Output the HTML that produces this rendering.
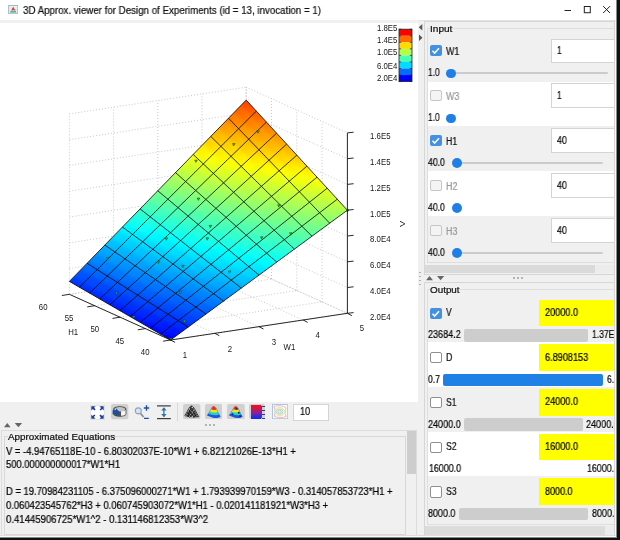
<!DOCTYPE html><html><head><meta charset="utf-8"><title>3D Approx. viewer</title><style>
*{box-sizing:border-box;margin:0;padding:0}
html,body{width:620px;height:540px;overflow:hidden;background:#f0f0f0}
body{position:relative;font-family:"Liberation Sans",sans-serif;font-size:10px;color:#000}
.abs{position:absolute}
.t{position:absolute;white-space:nowrap;transform-origin:0 0;display:block;-webkit-text-stroke:0.22px currentColor;will-change:transform}
.cb{position:absolute;width:11.5px;height:11.2px;border-radius:2px}
.cb.on{background:#4490e2}
.cb.off{background:#fff;border:1px solid #8f8f8f}
.cb.dis{background:#f4f4f4;border:1px solid #c6c6c6}
.fld{position:absolute;background:#fff;border:1px solid #d4d4d4}
.yl{position:absolute;background:#ffff00}
.knob{position:absolute;width:9.6px;height:9.6px;border-radius:5px;background:#1f7fe8}
.trk{position:absolute;height:1.6px;background:#cfcfcf;border-radius:1px}
.bar{position:absolute;border-radius:2px;background:#cdcdcd}
</style></head><body><div class="abs" style="left:0.0px;top:0.0px;width:620.0px;height:19.5px;background:#fff;"></div>
<div class="abs" style="left:418.0px;top:19.5px;width:202.0px;height:1.0px;background:#e4e4e4;"></div>
<svg class="abs" style="left:7.500px;top:4.800px" width="10.500" height="9.200" viewBox="0 0 12 11"><rect x="0.5" y="0.5" width="11" height="10" fill="#e8eef5" stroke="#a4abb4" stroke-width="1"/><path d="M2 9 L6 2.5 L10 9Z" fill="#39c"/><path d="M3.8 6.2 L6 2.5 L8.2 6.2Z" fill="#f33"/><path d="M3 7.5 L9 7.500 L8.2 6.2 L3.8 6.2Z" fill="#fd3"/></svg>
<div class="t" id="t0" style="left:23.00px;top:3.85px;font-size:10.58px;line-height:12.17px;color:#111;transform:scaleX(0.9198);">3D Approx. viewer for Design of Experiments (id = 13, invocation = 1)</div>
<svg class="abs" style="left:560px;top:0" width="57" height="19" viewBox="0 0 57 19"><g stroke="#222" stroke-width="1" fill="none"><line x1="4.500" y1="10.500" x2="11" y2="10.500"/><rect x="24.300" y="6.500" width="6" height="6.200"/><path d="M43.200 6.200 L50 13 M50 6.200 L43.200 13"/></g></svg>
<div class="abs" style="left:0.0px;top:22.5px;width:418.0px;height:379.0px;background:#fff;"></div>
<svg width="418" height="402" viewBox="0 0 418 402" style="position:absolute;left:0;top:0;will-change:transform"><g stroke="#b0b0b0" stroke-width="0.7" stroke-dasharray="1 2" fill="none"><line x1="170.6" y1="340.0" x2="69.4" y2="294.3"/><line x1="170.6" y1="340.0" x2="347.4" y2="313.3"/><line x1="214.8" y1="333.3" x2="113.6" y2="287.6"/><line x1="145.3" y1="328.6" x2="322.1" y2="301.9"/><line x1="259.0" y1="326.6" x2="157.8" y2="281.0"/><line x1="120.0" y1="317.2" x2="296.8" y2="290.5"/><line x1="303.2" y1="320.0" x2="202.0" y2="274.3"/><line x1="94.7" y1="305.7" x2="271.5" y2="279.0"/><line x1="347.4" y1="313.3" x2="246.2" y2="267.6"/><line x1="69.4" y1="294.3" x2="246.2" y2="267.6"/><line x1="69.4" y1="294.3" x2="69.4" y2="113.9"/><line x1="347.4" y1="313.3" x2="347.4" y2="132.9"/><line x1="113.6" y1="287.6" x2="113.6" y2="107.2"/><line x1="322.1" y1="301.9" x2="322.1" y2="121.5"/><line x1="157.8" y1="281.0" x2="157.8" y2="100.6"/><line x1="296.8" y1="290.5" x2="296.8" y2="110.1"/><line x1="202.0" y1="274.3" x2="202.0" y2="93.9"/><line x1="271.5" y1="279.0" x2="271.5" y2="98.6"/><line x1="246.2" y1="267.6" x2="246.2" y2="87.2"/><line x1="246.2" y1="267.6" x2="246.2" y2="87.2"/><line x1="69.4" y1="294.3" x2="246.2" y2="267.6"/><line x1="246.2" y1="267.6" x2="347.4" y2="313.3"/><line x1="69.4" y1="268.5" x2="246.2" y2="241.8"/><line x1="246.2" y1="241.8" x2="347.4" y2="287.5"/><line x1="69.4" y1="242.8" x2="246.2" y2="216.1"/><line x1="246.2" y1="216.1" x2="347.4" y2="261.8"/><line x1="69.4" y1="217.0" x2="246.2" y2="190.3"/><line x1="246.2" y1="190.3" x2="347.4" y2="236.0"/><line x1="69.4" y1="191.2" x2="246.2" y2="164.5"/><line x1="246.2" y1="164.5" x2="347.4" y2="210.2"/><line x1="69.4" y1="165.4" x2="246.2" y2="138.7"/><line x1="246.2" y1="138.7" x2="347.4" y2="184.4"/><line x1="69.4" y1="139.7" x2="246.2" y2="113.0"/><line x1="246.2" y1="113.0" x2="347.4" y2="158.7"/><line x1="69.4" y1="113.9" x2="246.2" y2="87.2"/><line x1="246.2" y1="87.2" x2="347.4" y2="132.9"/></g><defs><clipPath id="sc"><polygon points="170.6,340.0 347.4,210.2 246.2,100.1 69.4,281.4"/></clipPath><filter id="bl" x="-5%" y="-5%" width="110%" height="110%"><feGaussianBlur stdDeviation="2.2"/></filter></defs><g clip-path="url(#sc)"><g filter="url(#bl)" stroke-width="0.8" shape-rendering="crispEdges"><path d="M166.1 351.1L173.7 345.7L169.3 343.2L161.7 348.7" fill="#0000ff"/><path d="M161.7 348.7L169.3 343.2L165.0 340.7L157.3 346.3" fill="#0000ff"/><path d="M157.3 346.3L165.0 340.7L160.6 338.2L153.0 343.9" fill="#0000ff"/><path d="M153.0 343.9L160.6 338.2L156.2 335.7L148.6 341.6" fill="#0000ff"/><path d="M148.6 341.6L156.2 335.7L151.9 333.2L144.3 339.2" fill="#0000ff"/><path d="M144.3 339.2L151.9 333.2L147.5 330.7L139.9 336.8" fill="#0000ff"/><path d="M139.9 336.8L147.5 330.7L143.2 328.3L135.5 334.4" fill="#0000ff"/><path d="M135.5 334.4L143.2 328.3L138.8 325.8L131.2 332.0" fill="#0000ff"/><path d="M131.2 332.0L138.8 325.8L134.4 323.3L126.8 329.6" fill="#0000ff"/><path d="M126.8 329.6L134.4 323.3L130.1 320.8L122.5 327.2" fill="#0000ff"/><path d="M122.5 327.2L130.1 320.8L125.7 318.3L118.1 324.8" fill="#0001ff"/><path d="M118.1 324.8L125.7 318.3L121.4 315.8L113.8 322.4" fill="#0003ff"/><path d="M113.8 322.4L121.4 315.8L117.0 313.3L109.4 320.0" fill="#0005ff"/><path d="M109.4 320.0L117.0 313.3L112.6 310.9L105.0 317.7" fill="#0007ff"/><path d="M105.0 317.7L112.6 310.9L108.3 308.4L100.7 315.3" fill="#0009ff"/><path d="M100.7 315.3L108.3 308.4L103.9 305.9L96.3 312.9" fill="#000bff"/><path d="M96.3 312.9L103.9 305.9L99.6 303.4L92.0 310.5" fill="#000dff"/><path d="M92.0 310.5L99.6 303.4L95.2 300.9L87.6 308.1" fill="#000fff"/><path d="M87.6 308.1L95.2 300.9L90.9 298.4L83.2 305.7" fill="#0011ff"/><path d="M83.2 305.7L90.9 298.4L86.5 295.9L78.9 303.3" fill="#0013ff"/><path d="M78.9 303.3L86.5 295.9L82.1 293.5L74.5 300.9" fill="#0015ff"/><path d="M74.5 300.9L82.1 293.5L77.8 291.0L70.2 298.5" fill="#0017ff"/><path d="M70.2 298.5L77.8 291.0L73.4 288.5L65.8 296.1" fill="#0019ff"/><path d="M65.8 296.1L73.4 288.5L69.1 286.0L61.4 293.7" fill="#001bff"/><path d="M61.4 293.7L69.1 286.0L64.7 283.5L57.1 291.4" fill="#001dff"/><path d="M57.1 291.4L64.7 283.5L60.3 281.0L52.7 289.0" fill="#001fff"/><path d="M173.7 345.7L181.3 340.2L176.9 337.6L169.3 343.2" fill="#0000ff"/><path d="M169.3 343.2L176.9 337.6L172.6 335.0L165.0 340.7" fill="#0002ff"/><path d="M165.0 340.7L172.6 335.0L168.2 332.5L160.6 338.2" fill="#0005ff"/><path d="M160.6 338.2L168.2 332.5L163.9 329.9L156.2 335.7" fill="#0007ff"/><path d="M156.2 335.7L163.9 329.9L159.5 327.3L151.9 333.2" fill="#0009ff"/><path d="M151.9 333.2L159.5 327.3L155.1 324.7L147.5 330.7" fill="#000cff"/><path d="M147.5 330.7L155.1 324.7L150.8 322.1L143.2 328.3" fill="#000eff"/><path d="M143.2 328.3L150.8 322.1L146.4 319.5L138.8 325.8" fill="#0010ff"/><path d="M138.8 325.8L146.4 319.5L142.1 317.0L134.4 323.3" fill="#0013ff"/><path d="M134.4 323.3L142.1 317.0L137.7 314.4L130.1 320.8" fill="#0015ff"/><path d="M130.1 320.8L137.7 314.4L133.3 311.8L125.7 318.3" fill="#0018ff"/><path d="M125.7 318.3L133.3 311.8L129.0 309.2L121.4 315.8" fill="#001aff"/><path d="M121.4 315.8L129.0 309.2L124.6 306.6L117.0 313.3" fill="#001cff"/><path d="M117.0 313.3L124.6 306.6L120.3 304.1L112.6 310.9" fill="#001fff"/><path d="M112.6 310.9L120.3 304.1L115.9 301.5L108.3 308.4" fill="#0021ff"/><path d="M108.3 308.4L115.9 301.5L111.5 298.9L103.9 305.9" fill="#0023ff"/><path d="M103.9 305.9L111.5 298.9L107.2 296.3L99.6 303.4" fill="#0026ff"/><path d="M99.6 303.4L107.2 296.3L102.8 293.7L95.2 300.9" fill="#0028ff"/><path d="M95.2 300.9L102.8 293.7L98.5 291.1L90.9 298.4" fill="#002aff"/><path d="M90.9 298.4L98.5 291.1L94.1 288.6L86.5 295.9" fill="#002dff"/><path d="M86.5 295.9L94.1 288.6L89.7 286.0L82.1 293.5" fill="#002fff"/><path d="M82.1 293.5L89.7 286.0L85.4 283.4L77.8 291.0" fill="#0032ff"/><path d="M77.8 291.0L85.4 283.4L81.0 280.8L73.4 288.5" fill="#0034ff"/><path d="M73.4 288.5L81.0 280.8L76.7 278.2L69.1 286.0" fill="#0036ff"/><path d="M69.1 286.0L76.7 278.2L72.3 275.7L64.7 283.5" fill="#0039ff"/><path d="M64.7 283.5L72.3 275.7L68.0 273.1L60.3 281.0" fill="#003bff"/><path d="M181.3 340.2L188.9 334.7L184.6 332.1L176.9 337.6" fill="#0012ff"/><path d="M176.9 337.6L184.6 332.1L180.2 329.4L172.6 335.0" fill="#0015ff"/><path d="M172.6 335.0L180.2 329.4L175.8 326.7L168.2 332.5" fill="#0018ff"/><path d="M168.2 332.5L175.8 326.7L171.5 324.0L163.9 329.9" fill="#001aff"/><path d="M163.9 329.9L171.5 324.0L167.1 321.4L159.5 327.3" fill="#001dff"/><path d="M159.5 327.3L167.1 321.4L162.8 318.7L155.1 324.7" fill="#0020ff"/><path d="M155.1 324.7L162.8 318.7L158.4 316.0L150.8 322.1" fill="#0023ff"/><path d="M150.8 322.1L158.4 316.0L154.0 313.3L146.4 319.5" fill="#0025ff"/><path d="M146.4 319.5L154.0 313.3L149.7 310.6L142.1 317.0" fill="#0028ff"/><path d="M142.1 317.0L149.7 310.6L145.3 308.0L137.7 314.4" fill="#002bff"/><path d="M137.7 314.4L145.3 308.0L141.0 305.3L133.3 311.8" fill="#002eff"/><path d="M133.3 311.8L141.0 305.3L136.6 302.6L129.0 309.2" fill="#0030ff"/><path d="M129.0 309.2L136.6 302.6L132.2 299.9L124.6 306.6" fill="#0033ff"/><path d="M124.6 306.6L132.2 299.9L127.9 297.3L120.3 304.1" fill="#0036ff"/><path d="M120.3 304.1L127.9 297.3L123.5 294.6L115.9 301.5" fill="#0039ff"/><path d="M115.9 301.5L123.5 294.6L119.2 291.9L111.5 298.9" fill="#003cff"/><path d="M111.5 298.9L119.2 291.9L114.8 289.2L107.2 296.3" fill="#003eff"/><path d="M107.2 296.3L114.8 289.2L110.4 286.6L102.8 293.7" fill="#0041ff"/><path d="M102.8 293.7L110.4 286.6L106.1 283.9L98.5 291.1" fill="#0044ff"/><path d="M98.5 291.1L106.1 283.9L101.7 281.2L94.1 288.6" fill="#0047ff"/><path d="M94.1 288.6L101.7 281.2L97.4 278.5L89.7 286.0" fill="#0049ff"/><path d="M89.7 286.0L97.4 278.5L93.0 275.8L85.4 283.4" fill="#004cff"/><path d="M85.4 283.4L93.0 275.8L88.6 273.2L81.0 280.8" fill="#004fff"/><path d="M81.0 280.8L88.6 273.2L84.3 270.5L76.7 278.2" fill="#0052ff"/><path d="M76.7 278.2L84.3 270.5L79.9 267.8L72.3 275.7" fill="#0054ff"/><path d="M72.3 275.7L79.9 267.8L75.6 265.1L68.0 273.1" fill="#0057ff"/><path d="M188.9 334.7L196.5 329.3L192.2 326.5L184.6 332.1" fill="#0024ff"/><path d="M184.6 332.1L192.2 326.5L187.8 323.7L180.2 329.4" fill="#0027ff"/><path d="M180.2 329.4L187.8 323.7L183.4 321.0L175.8 326.7" fill="#002bff"/><path d="M175.8 326.7L183.4 321.0L179.1 318.2L171.5 324.0" fill="#002eff"/><path d="M171.5 324.0L179.1 318.2L174.7 315.4L167.1 321.4" fill="#0031ff"/><path d="M167.1 321.4L174.7 315.4L170.4 312.6L162.8 318.7" fill="#0034ff"/><path d="M162.8 318.7L170.4 312.6L166.0 309.9L158.4 316.0" fill="#0037ff"/><path d="M158.4 316.0L166.0 309.9L161.7 307.1L154.0 313.3" fill="#003aff"/><path d="M154.0 313.3L161.7 307.1L157.3 304.3L149.7 310.6" fill="#003eff"/><path d="M149.7 310.6L157.3 304.3L152.9 301.6L145.3 308.0" fill="#0041ff"/><path d="M145.3 308.0L152.9 301.6L148.6 298.8L141.0 305.3" fill="#0044ff"/><path d="M141.0 305.3L148.6 298.8L144.2 296.0L136.6 302.6" fill="#0047ff"/><path d="M136.6 302.6L144.2 296.0L139.9 293.2L132.2 299.9" fill="#004aff"/><path d="M132.2 299.9L139.9 293.2L135.5 290.5L127.9 297.3" fill="#004dff"/><path d="M127.9 297.3L135.5 290.5L131.1 287.7L123.5 294.6" fill="#0051ff"/><path d="M123.5 294.6L131.1 287.7L126.8 284.9L119.2 291.9" fill="#0054ff"/><path d="M119.2 291.9L126.8 284.9L122.4 282.1L114.8 289.2" fill="#0057ff"/><path d="M114.8 289.2L122.4 282.1L118.1 279.4L110.4 286.6" fill="#005aff"/><path d="M110.4 286.6L118.1 279.4L113.7 276.6L106.1 283.9" fill="#005dff"/><path d="M106.1 283.9L113.7 276.6L109.3 273.8L101.7 281.2" fill="#0060ff"/><path d="M101.7 281.2L109.3 273.8L105.0 271.1L97.4 278.5" fill="#0064ff"/><path d="M97.4 278.5L105.0 271.1L100.6 268.3L93.0 275.8" fill="#0067ff"/><path d="M93.0 275.8L100.6 268.3L96.3 265.5L88.6 273.2" fill="#006aff"/><path d="M88.6 273.2L96.3 265.5L91.9 262.7L84.3 270.5" fill="#006dff"/><path d="M84.3 270.5L91.9 262.7L87.5 260.0L79.9 267.8" fill="#0070ff"/><path d="M79.9 267.8L87.5 260.0L83.2 257.2L75.6 265.1" fill="#0073ff"/><path d="M196.5 329.3L204.1 323.8L199.8 321.0L192.2 326.5" fill="#0037ff"/><path d="M192.2 326.5L199.8 321.0L195.4 318.1L187.8 323.7" fill="#003aff"/><path d="M187.8 323.7L195.4 318.1L191.1 315.2L183.4 321.0" fill="#003eff"/><path d="M183.4 321.0L191.1 315.2L186.7 312.4L179.1 318.2" fill="#0041ff"/><path d="M179.1 318.2L186.7 312.4L182.3 309.5L174.7 315.4" fill="#0045ff"/><path d="M174.7 315.4L182.3 309.5L178.0 306.6L170.4 312.6" fill="#0048ff"/><path d="M170.4 312.6L178.0 306.6L173.6 303.7L166.0 309.9" fill="#004cff"/><path d="M166.0 309.9L173.6 303.7L169.3 300.9L161.7 307.1" fill="#004fff"/><path d="M161.7 307.1L169.3 300.9L164.9 298.0L157.3 304.3" fill="#0053ff"/><path d="M157.3 304.3L164.9 298.0L160.6 295.1L152.9 301.6" fill="#0057ff"/><path d="M152.9 301.6L160.6 295.1L156.2 292.3L148.6 298.8" fill="#005aff"/><path d="M148.6 298.8L156.2 292.3L151.8 289.4L144.2 296.0" fill="#005eff"/><path d="M144.2 296.0L151.8 289.4L147.5 286.5L139.9 293.2" fill="#0061ff"/><path d="M139.9 293.2L147.5 286.5L143.1 283.7L135.5 290.5" fill="#0065ff"/><path d="M135.5 290.5L143.1 283.7L138.8 280.8L131.1 287.7" fill="#0068ff"/><path d="M131.1 287.7L138.8 280.8L134.4 277.9L126.8 284.9" fill="#006cff"/><path d="M126.8 284.9L134.4 277.9L130.0 275.1L122.4 282.1" fill="#0070ff"/><path d="M122.4 282.1L130.0 275.1L125.7 272.2L118.1 279.4" fill="#0073ff"/><path d="M118.1 279.4L125.7 272.2L121.3 269.3L113.7 276.6" fill="#0077ff"/><path d="M113.7 276.6L121.3 269.3L117.0 266.5L109.3 273.8" fill="#007aff"/><path d="M109.3 273.8L117.0 266.5L112.6 263.6L105.0 271.1" fill="#007eff"/><path d="M105.0 271.1L112.6 263.6L108.2 260.7L100.6 268.3" fill="#0081ff"/><path d="M100.6 268.3L108.2 260.7L103.9 257.8L96.3 265.5" fill="#0085ff"/><path d="M96.3 265.5L103.9 257.8L99.5 255.0L91.9 262.7" fill="#0088ff"/><path d="M91.9 262.7L99.5 255.0L95.2 252.1L87.5 260.0" fill="#008cff"/><path d="M87.5 260.0L95.2 252.1L90.8 249.2L83.2 257.2" fill="#0090ff"/><path d="M204.1 323.8L211.8 318.4L207.4 315.4L199.8 321.0" fill="#0049ff"/><path d="M199.8 321.0L207.4 315.4L203.0 312.4L195.4 318.1" fill="#004dff"/><path d="M195.4 318.1L203.0 312.4L198.7 309.5L191.1 315.2" fill="#0051ff"/><path d="M191.1 315.2L198.7 309.5L194.3 306.5L186.7 312.4" fill="#0055ff"/><path d="M186.7 312.4L194.3 306.5L190.0 303.5L182.3 309.5" fill="#0059ff"/><path d="M182.3 309.5L190.0 303.5L185.6 300.6L178.0 306.6" fill="#005dff"/><path d="M178.0 306.6L185.6 300.6L181.2 297.6L173.6 303.7" fill="#0060ff"/><path d="M173.6 303.7L181.2 297.6L176.9 294.7L169.3 300.9" fill="#0064ff"/><path d="M169.3 300.9L176.9 294.7L172.5 291.7L164.9 298.0" fill="#0068ff"/><path d="M164.9 298.0L172.5 291.7L168.2 288.7L160.6 295.1" fill="#006cff"/><path d="M160.6 295.1L168.2 288.7L163.8 285.8L156.2 292.3" fill="#0070ff"/><path d="M156.2 292.3L163.8 285.8L159.4 282.8L151.8 289.4" fill="#0074ff"/><path d="M151.8 289.4L159.4 282.8L155.1 279.8L147.5 286.5" fill="#0078ff"/><path d="M147.5 286.5L155.1 279.8L150.7 276.9L143.1 283.7" fill="#007cff"/><path d="M143.1 283.7L150.7 276.9L146.4 273.9L138.8 280.8" fill="#0080ff"/><path d="M138.8 280.8L146.4 273.9L142.0 270.9L134.4 277.9" fill="#0084ff"/><path d="M134.4 277.9L142.0 270.9L137.7 268.0L130.0 275.1" fill="#0088ff"/><path d="M130.0 275.1L137.7 268.0L133.3 265.0L125.7 272.2" fill="#008cff"/><path d="M125.7 272.2L133.3 265.0L128.9 262.0L121.3 269.3" fill="#0090ff"/><path d="M121.3 269.3L128.9 262.0L124.6 259.1L117.0 266.5" fill="#0094ff"/><path d="M117.0 266.5L124.6 259.1L120.2 256.1L112.6 263.6" fill="#0098ff"/><path d="M112.6 263.6L120.2 256.1L115.9 253.2L108.2 260.7" fill="#009cff"/><path d="M108.2 260.7L115.9 253.2L111.5 250.2L103.9 257.8" fill="#00a0ff"/><path d="M103.9 257.8L111.5 250.2L107.1 247.2L99.5 255.0" fill="#00a4ff"/><path d="M99.5 255.0L107.1 247.2L102.8 244.3L95.2 252.1" fill="#00a8ff"/><path d="M95.2 252.1L102.8 244.3L98.4 241.3L90.8 249.2" fill="#00acff"/><path d="M211.8 318.4L219.4 312.9L215.0 309.9L207.4 315.4" fill="#005bff"/><path d="M207.4 315.4L215.0 309.9L210.7 306.8L203.0 312.4" fill="#005fff"/><path d="M203.0 312.4L210.7 306.8L206.3 303.7L198.7 309.5" fill="#0064ff"/><path d="M198.7 309.5L206.3 303.7L201.9 300.7L194.3 306.5" fill="#0068ff"/><path d="M194.3 306.5L201.9 300.7L197.6 297.6L190.0 303.5" fill="#006cff"/><path d="M190.0 303.5L197.6 297.6L193.2 294.6L185.6 300.6" fill="#0071ff"/><path d="M185.6 300.6L193.2 294.6L188.9 291.5L181.2 297.6" fill="#0075ff"/><path d="M181.2 297.6L188.9 291.5L184.5 288.4L176.9 294.7" fill="#0079ff"/><path d="M176.9 294.7L184.5 288.4L180.1 285.4L172.5 291.7" fill="#007eff"/><path d="M172.5 291.7L180.1 285.4L175.8 282.3L168.2 288.7" fill="#0082ff"/><path d="M168.2 288.7L175.8 282.3L171.4 279.3L163.8 285.8" fill="#0087ff"/><path d="M163.8 285.8L171.4 279.3L167.1 276.2L159.4 282.8" fill="#008bff"/><path d="M159.4 282.8L167.1 276.2L162.7 273.1L155.1 279.8" fill="#008fff"/><path d="M155.1 279.8L162.7 273.1L158.3 270.1L150.7 276.9" fill="#0094ff"/><path d="M150.7 276.9L158.3 270.1L154.0 267.0L146.4 273.9" fill="#0098ff"/><path d="M146.4 273.9L154.0 267.0L149.6 264.0L142.0 270.9" fill="#009cff"/><path d="M142.0 270.9L149.6 264.0L145.3 260.9L137.7 268.0" fill="#00a1ff"/><path d="M137.7 268.0L145.3 260.9L140.9 257.8L133.3 265.0" fill="#00a5ff"/><path d="M133.3 265.0L140.9 257.8L136.5 254.8L128.9 262.0" fill="#00a9ff"/><path d="M128.9 262.0L136.5 254.8L132.2 251.7L124.6 259.1" fill="#00aeff"/><path d="M124.6 259.1L132.2 251.7L127.8 248.7L120.2 256.1" fill="#00b2ff"/><path d="M120.2 256.1L127.8 248.7L123.5 245.6L115.9 253.2" fill="#00b7ff"/><path d="M115.9 253.2L123.5 245.6L119.1 242.5L111.5 250.2" fill="#00bbff"/><path d="M111.5 250.2L119.1 242.5L114.8 239.5L107.1 247.2" fill="#00bfff"/><path d="M107.1 247.2L114.8 239.5L110.4 236.4L102.8 244.3" fill="#00c4ff"/><path d="M102.8 244.3L110.4 236.4L106.0 233.4L98.4 241.3" fill="#00c8ff"/><path d="M219.4 312.9L227.0 307.5L222.6 304.3L215.0 309.9" fill="#006dff"/><path d="M215.0 309.9L222.6 304.3L218.3 301.1L210.7 306.8" fill="#0072ff"/><path d="M210.7 306.8L218.3 301.1L213.9 298.0L206.3 303.7" fill="#0077ff"/><path d="M206.3 303.7L213.9 298.0L209.6 294.8L201.9 300.7" fill="#007bff"/><path d="M201.9 300.7L209.6 294.8L205.2 291.7L197.6 297.6" fill="#0080ff"/><path d="M197.6 297.6L205.2 291.7L200.8 288.5L193.2 294.6" fill="#0085ff"/><path d="M193.2 294.6L200.8 288.5L196.5 285.4L188.9 291.5" fill="#008aff"/><path d="M188.9 291.5L196.5 285.4L192.1 282.2L184.5 288.4" fill="#008eff"/><path d="M184.5 288.4L192.1 282.2L187.8 279.1L180.1 285.4" fill="#0093ff"/><path d="M180.1 285.4L187.8 279.1L183.4 275.9L175.8 282.3" fill="#0098ff"/><path d="M175.8 282.3L183.4 275.9L179.0 272.7L171.4 279.3" fill="#009dff"/><path d="M171.4 279.3L179.0 272.7L174.7 269.6L167.1 276.2" fill="#00a2ff"/><path d="M167.1 276.2L174.7 269.6L170.3 266.4L162.7 273.1" fill="#00a6ff"/><path d="M162.7 273.1L170.3 266.4L166.0 263.3L158.3 270.1" fill="#00abff"/><path d="M158.3 270.1L166.0 263.3L161.6 260.1L154.0 267.0" fill="#00b0ff"/><path d="M154.0 267.0L161.6 260.1L157.2 257.0L149.6 264.0" fill="#00b5ff"/><path d="M149.6 264.0L157.2 257.0L152.9 253.8L145.3 260.9" fill="#00b9ff"/><path d="M145.3 260.9L152.9 253.8L148.5 250.7L140.9 257.8" fill="#00beff"/><path d="M140.9 257.8L148.5 250.7L144.2 247.5L136.5 254.8" fill="#00c3ff"/><path d="M136.5 254.8L144.2 247.5L139.8 244.3L132.2 251.7" fill="#00c8ff"/><path d="M132.2 251.7L139.8 244.3L135.4 241.2L127.8 248.7" fill="#00ccff"/><path d="M127.8 248.7L135.4 241.2L131.1 238.0L123.5 245.6" fill="#00d1ff"/><path d="M123.5 245.6L131.1 238.0L126.7 234.9L119.1 242.5" fill="#00d6ff"/><path d="M119.1 242.5L126.7 234.9L122.4 231.7L114.8 239.5" fill="#00dbff"/><path d="M114.8 239.5L122.4 231.7L118.0 228.6L110.4 236.4" fill="#00dfff"/><path d="M110.4 236.4L118.0 228.6L113.6 225.4L106.0 233.4" fill="#00e4ff"/><path d="M227.0 307.5L234.6 302.0L230.2 298.7L222.6 304.3" fill="#007fff"/><path d="M222.6 304.3L230.2 298.7L225.9 295.5L218.3 301.1" fill="#0085ff"/><path d="M218.3 301.1L225.9 295.5L221.5 292.2L213.9 298.0" fill="#008aff"/><path d="M213.9 298.0L221.5 292.2L217.2 289.0L209.6 294.8" fill="#008fff"/><path d="M209.6 294.8L217.2 289.0L212.8 285.7L205.2 291.7" fill="#0094ff"/><path d="M205.2 291.7L212.8 285.7L208.5 282.5L200.8 288.5" fill="#0099ff"/><path d="M200.8 288.5L208.5 282.5L204.1 279.2L196.5 285.4" fill="#009eff"/><path d="M196.5 285.4L204.1 279.2L199.7 276.0L192.1 282.2" fill="#00a3ff"/><path d="M192.1 282.2L199.7 276.0L195.4 272.7L187.8 279.1" fill="#00a9ff"/><path d="M187.8 279.1L195.4 272.7L191.0 269.5L183.4 275.9" fill="#00aeff"/><path d="M183.4 275.9L191.0 269.5L186.7 266.2L179.0 272.7" fill="#00b3ff"/><path d="M179.0 272.7L186.7 266.2L182.3 263.0L174.7 269.6" fill="#00b8ff"/><path d="M174.7 269.6L182.3 263.0L177.9 259.7L170.3 266.4" fill="#00bdff"/><path d="M170.3 266.4L177.9 259.7L173.6 256.5L166.0 263.3" fill="#00c2ff"/><path d="M166.0 263.3L173.6 256.5L169.2 253.2L161.6 260.1" fill="#00c8ff"/><path d="M161.6 260.1L169.2 253.2L164.9 250.0L157.2 257.0" fill="#00cdff"/><path d="M157.2 257.0L164.9 250.0L160.5 246.7L152.9 253.8" fill="#00d2ff"/><path d="M152.9 253.8L160.5 246.7L156.1 243.5L148.5 250.7" fill="#00d7ff"/><path d="M148.5 250.7L156.1 243.5L151.8 240.2L144.2 247.5" fill="#00dcff"/><path d="M144.2 247.5L151.8 240.2L147.4 237.0L139.8 244.3" fill="#00e1ff"/><path d="M139.8 244.3L147.4 237.0L143.1 233.7L135.4 241.2" fill="#00e7ff"/><path d="M135.4 241.2L143.1 233.7L138.7 230.5L131.1 238.0" fill="#00ecff"/><path d="M131.1 238.0L138.7 230.5L134.3 227.2L126.7 234.9" fill="#00f1ff"/><path d="M126.7 234.9L134.3 227.2L130.0 224.0L122.4 231.7" fill="#00f6ff"/><path d="M122.4 231.7L130.0 224.0L125.6 220.7L118.0 228.6" fill="#00fbff"/><path d="M118.0 228.6L125.6 220.7L121.3 217.5L113.6 225.4" fill="#01fffe"/><path d="M234.6 302.0L242.2 296.5L237.9 293.2L230.2 298.7" fill="#0092ff"/><path d="M230.2 298.7L237.9 293.2L233.5 289.8L225.9 295.5" fill="#0097ff"/><path d="M225.9 295.5L233.5 289.8L229.1 286.5L221.5 292.2" fill="#009dff"/><path d="M221.5 292.2L229.1 286.5L224.8 283.2L217.2 289.0" fill="#00a2ff"/><path d="M217.2 289.0L224.8 283.2L220.4 279.8L212.8 285.7" fill="#00a8ff"/><path d="M212.8 285.7L220.4 279.8L216.1 276.5L208.5 282.5" fill="#00adff"/><path d="M208.5 282.5L216.1 276.5L211.7 273.1L204.1 279.2" fill="#00b3ff"/><path d="M204.1 279.2L211.7 273.1L207.3 269.8L199.7 276.0" fill="#00b8ff"/><path d="M199.7 276.0L207.3 269.8L203.0 266.4L195.4 272.7" fill="#00beff"/><path d="M195.4 272.7L203.0 266.4L198.6 263.1L191.0 269.5" fill="#00c4ff"/><path d="M191.0 269.5L198.6 263.1L194.3 259.7L186.7 266.2" fill="#00c9ff"/><path d="M186.7 266.2L194.3 259.7L189.9 256.4L182.3 263.0" fill="#00cfff"/><path d="M182.3 263.0L189.9 256.4L185.6 253.0L177.9 259.7" fill="#00d4ff"/><path d="M177.9 259.7L185.6 253.0L181.2 249.7L173.6 256.5" fill="#00daff"/><path d="M173.6 256.5L181.2 249.7L176.8 246.3L169.2 253.2" fill="#00dfff"/><path d="M169.2 253.2L176.8 246.3L172.5 243.0L164.9 250.0" fill="#00e5ff"/><path d="M164.9 250.0L172.5 243.0L168.1 239.6L160.5 246.7" fill="#00ebff"/><path d="M160.5 246.7L168.1 239.6L163.8 236.3L156.1 243.5" fill="#00f0ff"/><path d="M156.1 243.5L163.8 236.3L159.4 232.9L151.8 240.2" fill="#00f6ff"/><path d="M151.8 240.2L159.4 232.9L155.0 229.6L147.4 237.0" fill="#00fbff"/><path d="M147.4 237.0L155.0 229.6L150.7 226.3L143.1 233.7" fill="#02fffd"/><path d="M143.1 233.7L150.7 226.3L146.3 222.9L138.7 230.5" fill="#07fff8"/><path d="M138.7 230.5L146.3 222.9L142.0 219.6L134.3 227.2" fill="#0dfff2"/><path d="M134.3 227.2L142.0 219.6L137.6 216.2L130.0 224.0" fill="#12ffed"/><path d="M130.0 224.0L137.6 216.2L133.2 212.9L125.6 220.7" fill="#18ffe7"/><path d="M125.6 220.7L133.2 212.9L128.9 209.5L121.3 217.5" fill="#1effe1"/><path d="M242.2 296.5L249.8 291.1L245.5 287.6L237.9 293.2" fill="#00a4ff"/><path d="M237.9 293.2L245.5 287.6L241.1 284.2L233.5 289.8" fill="#00aaff"/><path d="M233.5 289.8L241.1 284.2L236.8 280.8L229.1 286.5" fill="#00b0ff"/><path d="M229.1 286.5L236.8 280.8L232.4 277.3L224.8 283.2" fill="#00b6ff"/><path d="M224.8 283.2L232.4 277.3L228.0 273.9L220.4 279.8" fill="#00bcff"/><path d="M220.4 279.8L228.0 273.9L223.7 270.4L216.1 276.5" fill="#00c2ff"/><path d="M216.1 276.5L223.7 270.4L219.3 267.0L211.7 273.1" fill="#00c8ff"/><path d="M211.7 273.1L219.3 267.0L215.0 263.5L207.3 269.8" fill="#00cdff"/><path d="M207.3 269.8L215.0 263.5L210.6 260.1L203.0 266.4" fill="#00d3ff"/><path d="M203.0 266.4L210.6 260.1L206.2 256.7L198.6 263.1" fill="#00d9ff"/><path d="M198.6 263.1L206.2 256.7L201.9 253.2L194.3 259.7" fill="#00dfff"/><path d="M194.3 259.7L201.9 253.2L197.5 249.8L189.9 256.4" fill="#00e5ff"/><path d="M189.9 256.4L197.5 249.8L193.2 246.3L185.6 253.0" fill="#00ebff"/><path d="M185.6 253.0L193.2 246.3L188.8 242.9L181.2 249.7" fill="#00f1ff"/><path d="M181.2 249.7L188.8 242.9L184.4 239.4L176.8 246.3" fill="#00f7ff"/><path d="M176.8 246.3L184.4 239.4L180.1 236.0L172.5 243.0" fill="#00fdff"/><path d="M172.5 243.0L180.1 236.0L175.7 232.6L168.1 239.6" fill="#04fffb"/><path d="M168.1 239.6L175.7 232.6L171.4 229.1L163.8 236.3" fill="#0afff5"/><path d="M163.8 236.3L171.4 229.1L167.0 225.7L159.4 232.9" fill="#10ffef"/><path d="M159.4 232.9L167.0 225.7L162.7 222.2L155.0 229.6" fill="#16ffe9"/><path d="M155.0 229.6L162.7 222.2L158.3 218.8L150.7 226.3" fill="#1cffe3"/><path d="M150.7 226.3L158.3 218.8L153.9 215.3L146.3 222.9" fill="#22ffdd"/><path d="M146.3 222.9L153.9 215.3L149.6 211.9L142.0 219.6" fill="#28ffd7"/><path d="M142.0 219.6L149.6 211.9L145.2 208.5L137.6 216.2" fill="#2effd1"/><path d="M137.6 216.2L145.2 208.5L140.9 205.0L133.2 212.9" fill="#34ffcb"/><path d="M133.2 212.9L140.9 205.0L136.5 201.6L128.9 209.5" fill="#3affc5"/><path d="M249.8 291.1L257.5 285.6L253.1 282.1L245.5 287.6" fill="#00b6ff"/><path d="M245.5 287.6L253.1 282.1L248.7 278.5L241.1 284.2" fill="#00bcff"/><path d="M241.1 284.2L248.7 278.5L244.4 275.0L236.8 280.8" fill="#00c3ff"/><path d="M236.8 280.8L244.4 275.0L240.0 271.5L232.4 277.3" fill="#00c9ff"/><path d="M232.4 277.3L240.0 271.5L235.7 267.9L228.0 273.9" fill="#00cfff"/><path d="M228.0 273.9L235.7 267.9L231.3 264.4L223.7 270.4" fill="#00d6ff"/><path d="M223.7 270.4L231.3 264.4L226.9 260.9L219.3 267.0" fill="#00dcff"/><path d="M219.3 267.0L226.9 260.9L222.6 257.3L215.0 263.5" fill="#00e2ff"/><path d="M215.0 263.5L222.6 257.3L218.2 253.8L210.6 260.1" fill="#00e9ff"/><path d="M210.6 260.1L218.2 253.8L213.9 250.2L206.2 256.7" fill="#00efff"/><path d="M206.2 256.7L213.9 250.2L209.5 246.7L201.9 253.2" fill="#00f6ff"/><path d="M201.9 253.2L209.5 246.7L205.1 243.2L197.5 249.8" fill="#00fcff"/><path d="M197.5 249.8L205.1 243.2L200.8 239.6L193.2 246.3" fill="#03fffc"/><path d="M193.2 246.3L200.8 239.6L196.4 236.1L188.8 242.9" fill="#0afff5"/><path d="M188.8 242.9L196.4 236.1L192.1 232.6L184.4 239.4" fill="#10ffef"/><path d="M184.4 239.4L192.1 232.6L187.7 229.0L180.1 236.0" fill="#16ffe9"/><path d="M180.1 236.0L187.7 229.0L183.3 225.5L175.7 232.6" fill="#1dffe2"/><path d="M175.7 232.6L183.3 225.5L179.0 221.9L171.4 229.1" fill="#23ffdc"/><path d="M171.4 229.1L179.0 221.9L174.6 218.4L167.0 225.7" fill="#29ffd6"/><path d="M167.0 225.7L174.6 218.4L170.3 214.9L162.7 222.2" fill="#30ffcf"/><path d="M162.7 222.2L170.3 214.9L165.9 211.3L158.3 218.8" fill="#36ffc9"/><path d="M158.3 218.8L165.9 211.3L161.5 207.8L153.9 215.3" fill="#3dffc2"/><path d="M153.9 215.3L161.5 207.8L157.2 204.2L149.6 211.9" fill="#43ffbc"/><path d="M149.6 211.9L157.2 204.2L152.8 200.7L145.2 208.5" fill="#49ffb6"/><path d="M145.2 208.5L152.8 200.7L148.5 197.2L140.9 205.0" fill="#50ffaf"/><path d="M140.9 205.0L148.5 197.2L144.1 193.6L136.5 201.6" fill="#56ffa9"/><path d="M257.5 285.6L265.1 280.2L260.7 276.5L253.1 282.1" fill="#00c8ff"/><path d="M253.1 282.1L260.7 276.5L256.4 272.9L248.7 278.5" fill="#00cfff"/><path d="M248.7 278.5L256.4 272.9L252.0 269.3L244.4 275.0" fill="#00d6ff"/><path d="M244.4 275.0L252.0 269.3L247.6 265.6L240.0 271.5" fill="#00dcff"/><path d="M240.0 271.5L247.6 265.6L243.3 262.0L235.7 267.9" fill="#00e3ff"/><path d="M235.7 267.9L243.3 262.0L238.9 258.4L231.3 264.4" fill="#00eaff"/><path d="M231.3 264.4L238.9 258.4L234.6 254.7L226.9 260.9" fill="#00f1ff"/><path d="M226.9 260.9L234.6 254.7L230.2 251.1L222.6 257.3" fill="#00f8ff"/><path d="M222.6 257.3L230.2 251.1L225.8 247.5L218.2 253.8" fill="#00feff"/><path d="M218.2 253.8L225.8 247.5L221.5 243.8L213.9 250.2" fill="#06fff9"/><path d="M213.9 250.2L221.5 243.8L217.1 240.2L209.5 246.7" fill="#0dfff2"/><path d="M209.5 246.7L217.1 240.2L212.8 236.6L205.1 243.2" fill="#14ffeb"/><path d="M205.1 243.2L212.8 236.6L208.4 232.9L200.8 239.6" fill="#1affe5"/><path d="M200.8 239.6L208.4 232.9L204.0 229.3L196.4 236.1" fill="#21ffde"/><path d="M196.4 236.1L204.0 229.3L199.7 225.7L192.1 232.6" fill="#28ffd7"/><path d="M192.1 232.6L199.7 225.7L195.3 222.0L187.7 229.0" fill="#2fffd0"/><path d="M187.7 229.0L195.3 222.0L191.0 218.4L183.3 225.5" fill="#35ffca"/><path d="M183.3 225.5L191.0 218.4L186.6 214.8L179.0 221.9" fill="#3cffc3"/><path d="M179.0 221.9L186.6 214.8L182.2 211.1L174.6 218.4" fill="#43ffbc"/><path d="M174.6 218.4L182.2 211.1L177.9 207.5L170.3 214.9" fill="#4affb5"/><path d="M170.3 214.9L177.9 207.5L173.5 203.9L165.9 211.3" fill="#50ffaf"/><path d="M165.9 211.3L173.5 203.9L169.2 200.2L161.5 207.8" fill="#57ffa8"/><path d="M161.5 207.8L169.2 200.2L164.8 196.6L157.2 204.2" fill="#5effa1"/><path d="M157.2 204.2L164.8 196.6L160.4 193.0L152.8 200.7" fill="#65ff9a"/><path d="M152.8 200.7L160.4 193.0L156.1 189.3L148.5 197.2" fill="#6bff94"/><path d="M148.5 197.2L156.1 189.3L151.7 185.7L144.1 193.6" fill="#72ff8d"/><path d="M265.1 280.2L272.7 274.7L268.3 271.0L260.7 276.5" fill="#00daff"/><path d="M260.7 276.5L268.3 271.0L264.0 267.3L256.4 272.9" fill="#00e2ff"/><path d="M256.4 272.9L264.0 267.3L259.6 263.5L252.0 269.3" fill="#00e9ff"/><path d="M252.0 269.3L259.6 263.5L255.3 259.8L247.6 265.6" fill="#00f0ff"/><path d="M247.6 265.6L255.3 259.8L250.9 256.1L243.3 262.0" fill="#00f7ff"/><path d="M243.3 262.0L250.9 256.1L246.5 252.3L238.9 258.4" fill="#00feff"/><path d="M238.9 258.4L246.5 252.3L242.2 248.6L234.6 254.7" fill="#06fff9"/><path d="M234.6 254.7L242.2 248.6L237.8 244.9L230.2 251.1" fill="#0efff1"/><path d="M230.2 251.1L237.8 244.9L233.5 241.1L225.8 247.5" fill="#15ffea"/><path d="M225.8 247.5L233.5 241.1L229.1 237.4L221.5 243.8" fill="#1cffe3"/><path d="M221.5 243.8L229.1 237.4L224.7 233.7L217.1 240.2" fill="#23ffdc"/><path d="M217.1 240.2L224.7 233.7L220.4 230.0L212.8 236.6" fill="#2affd5"/><path d="M212.8 236.6L220.4 230.0L216.0 226.2L208.4 232.9" fill="#31ffce"/><path d="M208.4 232.9L216.0 226.2L211.7 222.5L204.0 229.3" fill="#38ffc7"/><path d="M204.0 229.3L211.7 222.5L207.3 218.8L199.7 225.7" fill="#40ffbf"/><path d="M199.7 225.7L207.3 218.8L202.9 215.0L195.3 222.0" fill="#47ffb8"/><path d="M195.3 222.0L202.9 215.0L198.6 211.3L191.0 218.4" fill="#4effb1"/><path d="M191.0 218.4L198.6 211.3L194.2 207.6L186.6 214.8" fill="#55ffaa"/><path d="M186.6 214.8L194.2 207.6L189.9 203.9L182.2 211.1" fill="#5cffa3"/><path d="M182.2 211.1L189.9 203.9L185.5 200.1L177.9 207.5" fill="#63ff9c"/><path d="M177.9 207.5L185.5 200.1L181.1 196.4L173.5 203.9" fill="#6bff94"/><path d="M173.5 203.9L181.1 196.4L176.8 192.7L169.2 200.2" fill="#72ff8d"/><path d="M169.2 200.2L176.8 192.7L172.4 188.9L164.8 196.6" fill="#79ff86"/><path d="M164.8 196.6L172.4 188.9L168.1 185.2L160.4 193.0" fill="#80ff7f"/><path d="M160.4 193.0L168.1 185.2L163.7 181.5L156.1 189.3" fill="#87ff78"/><path d="M156.1 189.3L163.7 181.5L159.3 177.7L151.7 185.7" fill="#8eff71"/><path d="M272.7 274.7L280.3 269.3L275.9 265.4L268.3 271.0" fill="#00edff"/><path d="M268.3 271.0L275.9 265.4L271.6 261.6L264.0 267.3" fill="#00f4ff"/><path d="M264.0 267.3L271.6 261.6L267.2 257.8L259.6 263.5" fill="#00fcff"/><path d="M259.6 263.5L267.2 257.8L262.9 254.0L255.3 259.8" fill="#04fffb"/><path d="M255.3 259.8L262.9 254.0L258.5 250.1L250.9 256.1" fill="#0cfff3"/><path d="M250.9 256.1L258.5 250.1L254.1 246.3L246.5 252.3" fill="#13ffec"/><path d="M246.5 252.3L254.1 246.3L249.8 242.5L242.2 248.6" fill="#1bffe4"/><path d="M242.2 248.6L249.8 242.5L245.4 238.7L237.8 244.9" fill="#23ffdc"/><path d="M237.8 244.9L245.4 238.7L241.1 234.8L233.5 241.1" fill="#2affd5"/><path d="M233.5 241.1L241.1 234.8L236.7 231.0L229.1 237.4" fill="#32ffcd"/><path d="M229.1 237.4L236.7 231.0L232.4 227.2L224.7 233.7" fill="#39ffc6"/><path d="M224.7 233.7L232.4 227.2L228.0 223.4L220.4 230.0" fill="#41ffbe"/><path d="M220.4 230.0L228.0 223.4L223.6 219.5L216.0 226.2" fill="#48ffb7"/><path d="M216.0 226.2L223.6 219.5L219.3 215.7L211.7 222.5" fill="#50ffaf"/><path d="M211.7 222.5L219.3 215.7L214.9 211.9L207.3 218.8" fill="#57ffa8"/><path d="M207.3 218.8L214.9 211.9L210.6 208.1L202.9 215.0" fill="#5fffa0"/><path d="M202.9 215.0L210.6 208.1L206.2 204.2L198.6 211.3" fill="#67ff98"/><path d="M198.6 211.3L206.2 204.2L201.8 200.4L194.2 207.6" fill="#6eff91"/><path d="M194.2 207.6L201.8 200.4L197.5 196.6L189.9 203.9" fill="#76ff89"/><path d="M189.9 203.9L197.5 196.6L193.1 192.8L185.5 200.1" fill="#7dff82"/><path d="M185.5 200.1L193.1 192.8L188.8 188.9L181.1 196.4" fill="#85ff7a"/><path d="M181.1 196.4L188.8 188.9L184.4 185.1L176.8 192.7" fill="#8cff73"/><path d="M176.8 192.7L184.4 185.1L180.0 181.3L172.4 188.9" fill="#94ff6b"/><path d="M172.4 188.9L180.0 181.3L175.7 177.5L168.1 185.2" fill="#9cff63"/><path d="M168.1 185.2L175.7 177.5L171.3 173.6L163.7 181.5" fill="#a3ff5c"/><path d="M163.7 181.5L171.3 173.6L167.0 169.8L159.3 177.7" fill="#abff54"/><path d="M280.3 269.3L287.9 263.8L283.6 259.9L275.9 265.4" fill="#00ffff"/><path d="M275.9 265.4L283.6 259.9L279.2 256.0L271.6 261.6" fill="#08fff7"/><path d="M271.6 261.6L279.2 256.0L274.8 252.0L267.2 257.8" fill="#10ffef"/><path d="M267.2 257.8L274.8 252.0L270.5 248.1L262.9 254.0" fill="#18ffe7"/><path d="M262.9 254.0L270.5 248.1L266.1 244.2L258.5 250.1" fill="#20ffdf"/><path d="M258.5 250.1L266.1 244.2L261.8 240.3L254.1 246.3" fill="#28ffd7"/><path d="M254.1 246.3L261.8 240.3L257.4 236.4L249.8 242.5" fill="#30ffcf"/><path d="M249.8 242.5L257.4 236.4L253.0 232.4L245.4 238.7" fill="#38ffc7"/><path d="M245.4 238.7L253.0 232.4L248.7 228.5L241.1 234.8" fill="#3fffc0"/><path d="M241.1 234.8L248.7 228.5L244.3 224.6L236.7 231.0" fill="#47ffb8"/><path d="M236.7 231.0L244.3 224.6L240.0 220.7L232.4 227.2" fill="#4fffb0"/><path d="M232.4 227.2L240.0 220.7L235.6 216.7L228.0 223.4" fill="#57ffa8"/><path d="M228.0 223.4L235.6 216.7L231.2 212.8L223.6 219.5" fill="#5fffa0"/><path d="M223.6 219.5L231.2 212.8L226.9 208.9L219.3 215.7" fill="#67ff98"/><path d="M219.3 215.7L226.9 208.9L222.5 205.0L214.9 211.9" fill="#6fff90"/><path d="M214.9 211.9L222.5 205.0L218.2 201.1L210.6 208.1" fill="#77ff88"/><path d="M210.6 208.1L218.2 201.1L213.8 197.1L206.2 204.2" fill="#7fff80"/><path d="M206.2 204.2L213.8 197.1L209.5 193.2L201.8 200.4" fill="#87ff78"/><path d="M201.8 200.4L209.5 193.2L205.1 189.3L197.5 196.6" fill="#8fff70"/><path d="M197.5 196.6L205.1 189.3L200.7 185.4L193.1 192.8" fill="#97ff68"/><path d="M193.1 192.8L200.7 185.4L196.4 181.5L188.8 188.9" fill="#9fff60"/><path d="M188.8 188.9L196.4 181.5L192.0 177.5L184.4 185.1" fill="#a7ff58"/><path d="M184.4 185.1L192.0 177.5L187.7 173.6L180.0 181.3" fill="#afff50"/><path d="M180.0 181.3L187.7 173.6L183.3 169.7L175.7 177.5" fill="#b7ff48"/><path d="M175.7 177.5L183.3 169.7L178.9 165.8L171.3 173.6" fill="#bfff40"/><path d="M171.3 173.6L178.9 165.8L174.6 161.9L167.0 169.8" fill="#c7ff38"/><path d="M287.9 263.8L295.5 258.3L291.2 254.3L283.6 259.9" fill="#12ffed"/><path d="M283.6 259.9L291.2 254.3L286.8 250.3L279.2 256.0" fill="#1affe5"/><path d="M279.2 256.0L286.8 250.3L282.5 246.3L274.8 252.0" fill="#23ffdc"/><path d="M274.8 252.0L282.5 246.3L278.1 242.3L270.5 248.1" fill="#2bffd4"/><path d="M270.5 248.1L278.1 242.3L273.7 238.3L266.1 244.2" fill="#33ffcc"/><path d="M266.1 244.2L273.7 238.3L269.4 234.2L261.8 240.3" fill="#3cffc3"/><path d="M261.8 240.3L269.4 234.2L265.0 230.2L257.4 236.4" fill="#44ffbb"/><path d="M257.4 236.4L265.0 230.2L260.7 226.2L253.0 232.4" fill="#4dffb2"/><path d="M253.0 232.4L260.7 226.2L256.3 222.2L248.7 228.5" fill="#55ffaa"/><path d="M248.7 228.5L256.3 222.2L251.9 218.2L244.3 224.6" fill="#5dffa2"/><path d="M244.3 224.6L251.9 218.2L247.6 214.2L240.0 220.7" fill="#66ff99"/><path d="M240.0 220.7L247.6 214.2L243.2 210.1L235.6 216.7" fill="#6eff91"/><path d="M235.6 216.7L243.2 210.1L238.9 206.1L231.2 212.8" fill="#76ff89"/><path d="M231.2 212.8L238.9 206.1L234.5 202.1L226.9 208.9" fill="#7fff80"/><path d="M226.9 208.9L234.5 202.1L230.1 198.1L222.5 205.0" fill="#87ff78"/><path d="M222.5 205.0L230.1 198.1L225.8 194.1L218.2 201.1" fill="#8fff70"/><path d="M218.2 201.1L225.8 194.1L221.4 190.1L213.8 197.1" fill="#98ff67"/><path d="M213.8 197.1L221.4 190.1L217.1 186.0L209.5 193.2" fill="#a0ff5f"/><path d="M209.5 193.2L217.1 186.0L212.7 182.0L205.1 189.3" fill="#a9ff56"/><path d="M205.1 189.3L212.7 182.0L208.3 178.0L200.7 185.4" fill="#b1ff4e"/><path d="M200.7 185.4L208.3 178.0L204.0 174.0L196.4 181.5" fill="#b9ff46"/><path d="M196.4 181.5L204.0 174.0L199.6 170.0L192.0 177.5" fill="#c2ff3d"/><path d="M192.0 177.5L199.6 170.0L195.3 166.0L187.7 173.6" fill="#caff35"/><path d="M187.7 173.6L195.3 166.0L190.9 161.9L183.3 169.7" fill="#d2ff2d"/><path d="M183.3 169.7L190.9 161.9L186.6 157.9L178.9 165.8" fill="#dbff24"/><path d="M178.9 165.8L186.6 157.9L182.2 153.9L174.6 161.9" fill="#e3ff1c"/><path d="M295.5 258.3L303.2 252.9L298.8 248.8L291.2 254.3" fill="#24ffdb"/><path d="M291.2 254.3L298.8 248.8L294.4 244.7L286.8 250.3" fill="#2dffd2"/><path d="M286.8 250.3L294.4 244.7L290.1 240.5L282.5 246.3" fill="#36ffc9"/><path d="M282.5 246.3L290.1 240.5L285.7 236.4L278.1 242.3" fill="#3effc1"/><path d="M278.1 242.3L285.7 236.4L281.4 232.3L273.7 238.3" fill="#47ffb8"/><path d="M273.7 238.3L281.4 232.3L277.0 228.2L269.4 234.2" fill="#50ffaf"/><path d="M269.4 234.2L277.0 228.2L272.6 224.1L265.0 230.2" fill="#59ffa6"/><path d="M265.0 230.2L272.6 224.1L268.3 220.0L260.7 226.2" fill="#62ff9d"/><path d="M260.7 226.2L268.3 220.0L263.9 215.9L256.3 222.2" fill="#6aff95"/><path d="M256.3 222.2L263.9 215.9L259.6 211.8L251.9 218.2" fill="#73ff8c"/><path d="M251.9 218.2L259.6 211.8L255.2 207.6L247.6 214.2" fill="#7cff83"/><path d="M247.6 214.2L255.2 207.6L250.8 203.5L243.2 210.1" fill="#85ff7a"/><path d="M243.2 210.1L250.8 203.5L246.5 199.4L238.9 206.1" fill="#8dff72"/><path d="M238.9 206.1L246.5 199.4L242.1 195.3L234.5 202.1" fill="#96ff69"/><path d="M234.5 202.1L242.1 195.3L237.8 191.2L230.1 198.1" fill="#9fff60"/><path d="M230.1 198.1L237.8 191.2L233.4 187.1L225.8 194.1" fill="#a8ff57"/><path d="M225.8 194.1L233.4 187.1L229.0 183.0L221.4 190.1" fill="#b0ff4f"/><path d="M221.4 190.1L229.0 183.0L224.7 178.9L217.1 186.0" fill="#b9ff46"/><path d="M217.1 186.0L224.7 178.9L220.3 174.8L212.7 182.0" fill="#c2ff3d"/><path d="M212.7 182.0L220.3 174.8L216.0 170.6L208.3 178.0" fill="#cbff34"/><path d="M208.3 178.0L216.0 170.6L211.6 166.5L204.0 174.0" fill="#d3ff2c"/><path d="M204.0 174.0L211.6 166.5L207.2 162.4L199.6 170.0" fill="#dcff23"/><path d="M199.6 170.0L207.2 162.4L202.9 158.3L195.3 166.0" fill="#e5ff1a"/><path d="M195.3 166.0L202.9 158.3L198.5 154.2L190.9 161.9" fill="#eeff11"/><path d="M190.9 161.9L198.5 154.2L194.2 150.1L186.6 157.9" fill="#f6ff09"/><path d="M186.6 157.9L194.2 150.1L189.8 146.0L182.2 153.9" fill="#ffff00"/><path d="M303.2 252.9L310.8 247.4L306.4 243.2L298.8 248.8" fill="#36ffc9"/><path d="M298.8 248.8L306.4 243.2L302.0 239.0L294.4 244.7" fill="#40ffbf"/><path d="M294.4 244.7L302.0 239.0L297.7 234.8L290.1 240.5" fill="#49ffb6"/><path d="M290.1 240.5L297.7 234.8L293.3 230.6L285.7 236.4" fill="#52ffad"/><path d="M285.7 236.4L293.3 230.6L289.0 226.4L281.4 232.3" fill="#5bffa4"/><path d="M281.4 232.3L289.0 226.4L284.6 222.2L277.0 228.2" fill="#64ff9b"/><path d="M277.0 228.2L284.6 222.2L280.3 218.0L272.6 224.1" fill="#6dff92"/><path d="M272.6 224.1L280.3 218.0L275.9 213.8L268.3 220.0" fill="#77ff88"/><path d="M268.3 220.0L275.9 213.8L271.5 209.6L263.9 215.9" fill="#80ff7f"/><path d="M263.9 215.9L271.5 209.6L267.2 205.3L259.6 211.8" fill="#89ff76"/><path d="M259.6 211.8L267.2 205.3L262.8 201.1L255.2 207.6" fill="#92ff6d"/><path d="M255.2 207.6L262.8 201.1L258.5 196.9L250.8 203.5" fill="#9bff64"/><path d="M250.8 203.5L258.5 196.9L254.1 192.7L246.5 199.4" fill="#a4ff5b"/><path d="M246.5 199.4L254.1 192.7L249.7 188.5L242.1 195.3" fill="#aeff51"/><path d="M242.1 195.3L249.7 188.5L245.4 184.3L237.8 191.2" fill="#b7ff48"/><path d="M237.8 191.2L245.4 184.3L241.0 180.1L233.4 187.1" fill="#c0ff3f"/><path d="M233.4 187.1L241.0 180.1L236.7 175.9L229.0 183.0" fill="#c9ff36"/><path d="M229.0 183.0L236.7 175.9L232.3 171.7L224.7 178.9" fill="#d2ff2d"/><path d="M224.7 178.9L232.3 171.7L227.9 167.5L220.3 174.8" fill="#dbff24"/><path d="M220.3 174.8L227.9 167.5L223.6 163.3L216.0 170.6" fill="#e4ff1b"/><path d="M216.0 170.6L223.6 163.3L219.2 159.1L211.6 166.5" fill="#eeff11"/><path d="M211.6 166.5L219.2 159.1L214.9 154.9L207.2 162.4" fill="#f7ff08"/><path d="M207.2 162.4L214.9 154.9L210.5 150.6L202.9 158.3" fill="#fffe00"/><path d="M202.9 158.3L210.5 150.6L206.1 146.4L198.5 154.2" fill="#fff500"/><path d="M198.5 154.2L206.1 146.4L201.8 142.2L194.2 150.1" fill="#ffec00"/><path d="M194.2 150.1L201.8 142.2L197.4 138.0L189.8 146.0" fill="#ffe300"/><path d="M310.8 247.4L318.4 242.0L314.0 237.7L306.4 243.2" fill="#49ffb6"/><path d="M306.4 243.2L314.0 237.7L309.7 233.4L302.0 239.0" fill="#52ffad"/><path d="M302.0 239.0L309.7 233.4L305.3 229.1L297.7 234.8" fill="#5cffa3"/><path d="M297.7 234.8L305.3 229.1L300.9 224.8L293.3 230.6" fill="#65ff9a"/><path d="M293.3 230.6L300.9 224.8L296.6 220.4L289.0 226.4" fill="#6fff90"/><path d="M289.0 226.4L296.6 220.4L292.2 216.1L284.6 222.2" fill="#78ff87"/><path d="M284.6 222.2L292.2 216.1L287.9 211.8L280.3 218.0" fill="#82ff7d"/><path d="M280.3 218.0L287.9 211.8L283.5 207.5L275.9 213.8" fill="#8cff73"/><path d="M275.9 213.8L283.5 207.5L279.1 203.2L271.5 209.6" fill="#95ff6a"/><path d="M271.5 209.6L279.1 203.2L274.8 198.9L267.2 205.3" fill="#9fff60"/><path d="M267.2 205.3L274.8 198.9L270.4 194.6L262.8 201.1" fill="#a8ff57"/><path d="M262.8 201.1L270.4 194.6L266.1 190.3L258.5 196.9" fill="#b2ff4d"/><path d="M258.5 196.9L266.1 190.3L261.7 186.0L254.1 192.7" fill="#bbff44"/><path d="M254.1 192.7L261.7 186.0L257.4 181.7L249.7 188.5" fill="#c5ff3a"/><path d="M249.7 188.5L257.4 181.7L253.0 177.4L245.4 184.3" fill="#ceff31"/><path d="M245.4 184.3L253.0 177.4L248.6 173.1L241.0 180.1" fill="#d8ff27"/><path d="M241.0 180.1L248.6 173.1L244.3 168.8L236.7 175.9" fill="#e2ff1d"/><path d="M236.7 175.9L244.3 168.8L239.9 164.5L232.3 171.7" fill="#ebff14"/><path d="M232.3 171.7L239.9 164.5L235.6 160.2L227.9 167.5" fill="#f5ff0a"/><path d="M227.9 167.5L235.6 160.2L231.2 155.9L223.6 163.3" fill="#feff01"/><path d="M223.6 163.3L231.2 155.9L226.8 151.6L219.2 159.1" fill="#fff600"/><path d="M219.2 159.1L226.8 151.6L222.5 147.3L214.9 154.9" fill="#ffed00"/><path d="M214.9 154.9L222.5 147.3L218.1 143.0L210.5 150.6" fill="#ffe300"/><path d="M210.5 150.6L218.1 143.0L213.8 138.7L206.1 146.4" fill="#ffd900"/><path d="M206.1 146.4L213.8 138.7L209.4 134.4L201.8 142.2" fill="#ffd000"/><path d="M201.8 142.2L209.4 134.4L205.0 130.1L197.4 138.0" fill="#ffc600"/><path d="M318.4 242.0L326.0 236.5L321.6 232.1L314.0 237.7" fill="#5bffa4"/><path d="M314.0 237.7L321.6 232.1L317.3 227.7L309.7 233.4" fill="#65ff9a"/><path d="M309.7 233.4L317.3 227.7L312.9 223.3L305.3 229.1" fill="#6fff90"/><path d="M305.3 229.1L312.9 223.3L308.6 218.9L300.9 224.8" fill="#79ff86"/><path d="M300.9 224.8L308.6 218.9L304.2 214.5L296.6 220.4" fill="#83ff7c"/><path d="M296.6 220.4L304.2 214.5L299.8 210.1L292.2 216.1" fill="#8dff72"/><path d="M292.2 216.1L299.8 210.1L295.5 205.7L287.9 211.8" fill="#97ff68"/><path d="M287.9 211.8L295.5 205.7L291.1 201.3L283.5 207.5" fill="#a1ff5e"/><path d="M283.5 207.5L291.1 201.3L286.8 196.9L279.1 203.2" fill="#abff54"/><path d="M279.1 203.2L286.8 196.9L282.4 192.5L274.8 198.9" fill="#b4ff4b"/><path d="M274.8 198.9L282.4 192.5L278.0 188.1L270.4 194.6" fill="#beff41"/><path d="M270.4 194.6L278.0 188.1L273.7 183.7L266.1 190.3" fill="#c8ff37"/><path d="M266.1 190.3L273.7 183.7L269.3 179.3L261.7 186.0" fill="#d2ff2d"/><path d="M261.7 186.0L269.3 179.3L265.0 174.9L257.4 181.7" fill="#dcff23"/><path d="M257.4 181.7L265.0 174.9L260.6 170.5L253.0 177.4" fill="#e6ff19"/><path d="M253.0 177.4L260.6 170.5L256.2 166.1L248.6 173.1" fill="#f0ff0f"/><path d="M248.6 173.1L256.2 166.1L251.9 161.7L244.3 168.8" fill="#faff05"/><path d="M244.3 168.8L251.9 161.7L247.5 157.3L239.9 164.5" fill="#fffa00"/><path d="M239.9 164.5L247.5 157.3L243.2 152.9L235.6 160.2" fill="#fff000"/><path d="M235.6 160.2L243.2 152.9L238.8 148.5L231.2 155.9" fill="#ffe600"/><path d="M231.2 155.9L238.8 148.5L234.5 144.1L226.8 151.6" fill="#ffdc00"/><path d="M226.8 151.6L234.5 144.1L230.1 139.7L222.5 147.3" fill="#ffd200"/><path d="M222.5 147.3L230.1 139.7L225.7 135.3L218.1 143.0" fill="#ffc800"/><path d="M218.1 143.0L225.7 135.3L221.4 130.9L213.8 138.7" fill="#ffbe00"/><path d="M213.8 138.7L221.4 130.9L217.0 126.5L209.4 134.4" fill="#ffb400"/><path d="M209.4 134.4L217.0 126.5L212.7 122.1L205.0 130.1" fill="#ffaa00"/><path d="M326.0 236.5L333.6 231.1L329.3 226.6L321.6 232.1" fill="#6dff92"/><path d="M321.6 232.1L329.3 226.6L324.9 222.1L317.3 227.7" fill="#77ff88"/><path d="M317.3 227.7L324.9 222.1L320.5 217.6L312.9 223.3" fill="#82ff7d"/><path d="M312.9 223.3L320.5 217.6L316.2 213.1L308.6 218.9" fill="#8cff73"/><path d="M308.6 218.9L316.2 213.1L311.8 208.6L304.2 214.5" fill="#96ff69"/><path d="M304.2 214.5L311.8 208.6L307.5 204.1L299.8 210.1" fill="#a1ff5e"/><path d="M299.8 210.1L307.5 204.1L303.1 199.6L295.5 205.7" fill="#abff54"/><path d="M295.5 205.7L303.1 199.6L298.7 195.1L291.1 201.3" fill="#b6ff49"/><path d="M291.1 201.3L298.7 195.1L294.4 190.6L286.8 196.9" fill="#c0ff3f"/><path d="M286.8 196.9L294.4 190.6L290.0 186.1L282.4 192.5" fill="#caff35"/><path d="M282.4 192.5L290.0 186.1L285.7 181.6L278.0 188.1" fill="#d5ff2a"/><path d="M278.0 188.1L285.7 181.6L281.3 177.1L273.7 183.7" fill="#dfff20"/><path d="M273.7 183.7L281.3 177.1L276.9 172.6L269.3 179.3" fill="#e9ff16"/><path d="M269.3 179.3L276.9 172.6L272.6 168.1L265.0 174.9" fill="#f4ff0b"/><path d="M265.0 174.9L272.6 168.1L268.2 163.6L260.6 170.5" fill="#feff01"/><path d="M260.6 170.5L268.2 163.6L263.9 159.1L256.2 166.1" fill="#fff600"/><path d="M256.2 166.1L263.9 159.1L259.5 154.6L251.9 161.7" fill="#ffeb00"/><path d="M251.9 161.7L259.5 154.6L255.1 150.1L247.5 157.3" fill="#ffe100"/><path d="M247.5 157.3L255.1 150.1L250.8 145.7L243.2 152.9" fill="#ffd600"/><path d="M243.2 152.9L250.8 145.7L246.4 141.2L238.8 148.5" fill="#ffcc00"/><path d="M238.8 148.5L246.4 141.2L242.1 136.7L234.5 144.1" fill="#ffc200"/><path d="M234.5 144.1L242.1 136.7L237.7 132.2L230.1 139.7" fill="#ffb700"/><path d="M230.1 139.7L237.7 132.2L233.4 127.7L225.7 135.3" fill="#ffad00"/><path d="M225.7 135.3L233.4 127.7L229.0 123.2L221.4 130.9" fill="#ffa300"/><path d="M221.4 130.9L229.0 123.2L224.6 118.7L217.0 126.5" fill="#ff9800"/><path d="M217.0 126.5L224.6 118.7L220.3 114.2L212.7 122.1" fill="#ff8e00"/><path d="M333.6 231.1L341.2 225.6L336.9 221.0L329.3 226.6" fill="#7fff80"/><path d="M329.3 226.6L336.9 221.0L332.5 216.4L324.9 222.1" fill="#8aff75"/><path d="M324.9 222.1L332.5 216.4L328.2 211.8L320.5 217.6" fill="#95ff6a"/><path d="M320.5 217.6L328.2 211.8L323.8 207.2L316.2 213.1" fill="#a0ff5f"/><path d="M316.2 213.1L323.8 207.2L319.4 202.6L311.8 208.6" fill="#aaff55"/><path d="M311.8 208.6L319.4 202.6L315.1 198.1L307.5 204.1" fill="#b5ff4a"/><path d="M307.5 204.1L315.1 198.1L310.7 193.5L303.1 199.6" fill="#c0ff3f"/><path d="M303.1 199.6L310.7 193.5L306.4 188.9L298.7 195.1" fill="#cbff34"/><path d="M298.7 195.1L306.4 188.9L302.0 184.3L294.4 190.6" fill="#d5ff2a"/><path d="M294.4 190.6L302.0 184.3L297.6 179.7L290.0 186.1" fill="#e0ff1f"/><path d="M290.0 186.1L297.6 179.7L293.3 175.1L285.7 181.6" fill="#ebff14"/><path d="M285.7 181.6L293.3 175.1L288.9 170.5L281.3 177.1" fill="#f6ff09"/><path d="M281.3 177.1L288.9 170.5L284.6 165.9L276.9 172.6" fill="#fffe00"/><path d="M276.9 172.6L284.6 165.9L280.2 161.3L272.6 168.1" fill="#fff300"/><path d="M272.6 168.1L280.2 161.3L275.8 156.7L268.2 163.6" fill="#ffe800"/><path d="M268.2 163.6L275.8 156.7L271.5 152.1L263.9 159.1" fill="#ffdd00"/><path d="M263.9 159.1L271.5 152.1L267.1 147.6L259.5 154.6" fill="#ffd300"/><path d="M259.5 154.6L267.1 147.6L262.8 143.0L255.1 150.1" fill="#ffc800"/><path d="M255.1 150.1L262.8 143.0L258.4 138.4L250.8 145.7" fill="#ffbd00"/><path d="M250.8 145.7L258.4 138.4L254.0 133.8L246.4 141.2" fill="#ffb200"/><path d="M246.4 141.2L254.0 133.8L249.7 129.2L242.1 136.7" fill="#ffa800"/><path d="M242.1 136.7L249.7 129.2L245.3 124.6L237.7 132.2" fill="#ff9d00"/><path d="M237.7 132.2L245.3 124.6L241.0 120.0L233.4 127.7" fill="#ff9200"/><path d="M233.4 127.7L241.0 120.0L236.6 115.4L229.0 123.2" fill="#ff8700"/><path d="M229.0 123.2L236.6 115.4L232.2 110.8L224.6 118.7" fill="#ff7c00"/><path d="M224.6 118.7L232.2 110.8L227.9 106.2L220.3 114.2" fill="#ff7200"/><path d="M341.2 225.6L348.8 220.1L344.5 215.4L336.9 221.0" fill="#91ff6e"/><path d="M336.9 221.0L344.5 215.4L340.1 210.8L332.5 216.4" fill="#9dff62"/><path d="M332.5 216.4L340.1 210.8L335.8 206.1L328.2 211.8" fill="#a8ff57"/><path d="M328.2 211.8L335.8 206.1L331.4 201.4L323.8 207.2" fill="#b3ff4c"/><path d="M323.8 207.2L331.4 201.4L327.1 196.7L319.4 202.6" fill="#beff41"/><path d="M319.4 202.6L327.1 196.7L322.7 192.0L315.1 198.1" fill="#c9ff36"/><path d="M315.1 198.1L322.7 192.0L318.3 187.3L310.7 193.5" fill="#d4ff2b"/><path d="M310.7 193.5L318.3 187.3L314.0 182.6L306.4 188.9" fill="#e0ff1f"/><path d="M306.4 188.9L314.0 182.6L309.6 178.0L302.0 184.3" fill="#ebff14"/><path d="M302.0 184.3L309.6 178.0L305.3 173.3L297.6 179.7" fill="#f6ff09"/><path d="M297.6 179.7L305.3 173.3L300.9 168.6L293.3 175.1" fill="#fffd00"/><path d="M293.3 175.1L300.9 168.6L296.5 163.9L288.9 170.5" fill="#fff200"/><path d="M288.9 170.5L296.5 163.9L292.2 159.2L284.6 165.9" fill="#ffe700"/><path d="M284.6 165.9L292.2 159.2L287.8 154.5L280.2 161.3" fill="#ffdb00"/><path d="M280.2 161.3L287.8 154.5L283.5 149.8L275.8 156.7" fill="#ffd000"/><path d="M275.8 156.7L283.5 149.8L279.1 145.2L271.5 152.1" fill="#ffc500"/><path d="M271.5 152.1L279.1 145.2L274.7 140.5L267.1 147.6" fill="#ffba00"/><path d="M267.1 147.6L274.7 140.5L270.4 135.8L262.8 143.0" fill="#ffaf00"/><path d="M262.8 143.0L270.4 135.8L266.0 131.1L258.4 138.4" fill="#ffa400"/><path d="M258.4 138.4L266.0 131.1L261.7 126.4L254.0 133.8" fill="#ff9800"/><path d="M254.0 133.8L261.7 126.4L257.3 121.7L249.7 129.2" fill="#ff8d00"/><path d="M249.7 129.2L257.3 121.7L252.9 117.0L245.3 124.6" fill="#ff8200"/><path d="M245.3 124.6L252.9 117.0L248.6 112.4L241.0 120.0" fill="#ff7700"/><path d="M241.0 120.0L248.6 112.4L244.2 107.7L236.6 115.4" fill="#ff6c00"/><path d="M236.6 115.4L244.2 107.7L239.9 103.0L232.2 110.8" fill="#ff6100"/><path d="M232.2 110.8L239.9 103.0L235.5 98.3L227.9 106.2" fill="#ff5600"/><path d="M348.8 220.1L356.5 214.7L352.1 209.9L344.5 215.4" fill="#a4ff5b"/><path d="M344.5 215.4L352.1 209.9L347.7 205.1L340.1 210.8" fill="#afff50"/><path d="M340.1 210.8L347.7 205.1L343.4 200.3L335.8 206.1" fill="#bbff44"/><path d="M335.8 206.1L343.4 200.3L339.0 195.6L331.4 201.4" fill="#c6ff39"/><path d="M331.4 201.4L339.0 195.6L334.7 190.8L327.1 196.7" fill="#d2ff2d"/><path d="M327.1 196.7L334.7 190.8L330.3 186.0L322.7 192.0" fill="#ddff22"/><path d="M322.7 192.0L330.3 186.0L325.9 181.2L318.3 187.3" fill="#e9ff16"/><path d="M318.3 187.3L325.9 181.2L321.6 176.4L314.0 182.6" fill="#f5ff0a"/><path d="M314.0 182.6L321.6 176.4L317.2 171.6L309.6 178.0" fill="#fffe00"/><path d="M309.6 178.0L317.2 171.6L312.9 166.9L305.3 173.3" fill="#fff200"/><path d="M305.3 173.3L312.9 166.9L308.5 162.1L300.9 168.6" fill="#ffe700"/><path d="M300.9 168.6L308.5 162.1L304.2 157.3L296.5 163.9" fill="#ffdb00"/><path d="M296.5 163.9L304.2 157.3L299.8 152.5L292.2 159.2" fill="#ffd000"/><path d="M292.2 159.2L299.8 152.5L295.4 147.7L287.8 154.5" fill="#ffc400"/><path d="M287.8 154.5L295.4 147.7L291.1 143.0L283.5 149.8" fill="#ffb800"/><path d="M283.5 149.8L291.1 143.0L286.7 138.2L279.1 145.2" fill="#ffad00"/><path d="M279.1 145.2L286.7 138.2L282.4 133.4L274.7 140.5" fill="#ffa100"/><path d="M274.7 140.5L282.4 133.4L278.0 128.6L270.4 135.8" fill="#ff9600"/><path d="M270.4 135.8L278.0 128.6L273.6 123.8L266.0 131.1" fill="#ff8a00"/><path d="M266.0 131.1L273.6 123.8L269.3 119.0L261.7 126.4" fill="#ff7f00"/><path d="M261.7 126.4L269.3 119.0L264.9 114.3L257.3 121.7" fill="#ff7300"/><path d="M257.3 121.7L264.9 114.3L260.6 109.5L252.9 117.0" fill="#ff6800"/><path d="M252.9 117.0L260.6 109.5L256.2 104.7L248.6 112.4" fill="#ff5c00"/><path d="M248.6 112.4L256.2 104.7L251.8 99.9L244.2 107.7" fill="#ff5000"/><path d="M244.2 107.7L251.8 99.9L247.5 95.1L239.9 103.0" fill="#ff4500"/><path d="M239.9 103.0L247.5 95.1L243.1 90.4L235.5 98.3" fill="#ff3900"/><path d="M356.5 214.7L364.1 209.2L359.7 204.3L352.1 209.9" fill="#b6ff49"/><path d="M352.1 209.9L359.7 204.3L355.4 199.5L347.7 205.1" fill="#c2ff3d"/><path d="M347.7 205.1L355.4 199.5L351.0 194.6L343.4 200.3" fill="#ceff31"/><path d="M343.4 200.3L351.0 194.6L346.6 189.7L339.0 195.6" fill="#daff25"/><path d="M339.0 195.6L346.6 189.7L342.3 184.8L334.7 190.8" fill="#e6ff19"/><path d="M334.7 190.8L342.3 184.8L337.9 180.0L330.3 186.0" fill="#f2ff0d"/><path d="M330.3 186.0L337.9 180.0L333.6 175.1L325.9 181.2" fill="#feff01"/><path d="M325.9 181.2L333.6 175.1L329.2 170.2L321.6 176.4" fill="#fff400"/><path d="M321.6 176.4L329.2 170.2L324.8 165.3L317.2 171.6" fill="#ffe800"/><path d="M317.2 171.6L324.8 165.3L320.5 160.4L312.9 166.9" fill="#ffdc00"/><path d="M312.9 166.9L320.5 160.4L316.1 155.6L308.5 162.1" fill="#ffd100"/><path d="M308.5 162.1L316.1 155.6L311.8 150.7L304.2 157.3" fill="#ffc500"/><path d="M304.2 157.3L311.8 150.7L307.4 145.8L299.8 152.5" fill="#ffb900"/><path d="M299.8 152.5L307.4 145.8L303.0 140.9L295.4 147.7" fill="#ffad00"/><path d="M295.4 147.7L303.0 140.9L298.7 136.1L291.1 143.0" fill="#ffa100"/><path d="M291.1 143.0L298.7 136.1L294.3 131.2L286.7 138.2" fill="#ff9500"/><path d="M286.7 138.2L294.3 131.2L290.0 126.3L282.4 133.4" fill="#ff8900"/><path d="M282.4 133.4L290.0 126.3L285.6 121.4L278.0 128.6" fill="#ff7d00"/><path d="M278.0 128.6L285.6 121.4L281.3 116.6L273.6 123.8" fill="#ff7100"/><path d="M273.6 123.8L281.3 116.6L276.9 111.7L269.3 119.0" fill="#ff6500"/><path d="M269.3 119.0L276.9 111.7L272.5 106.8L264.9 114.3" fill="#ff5900"/><path d="M264.9 114.3L272.5 106.8L268.2 101.9L260.6 109.5" fill="#ff4d00"/><path d="M260.6 109.5L268.2 101.9L263.8 97.0L256.2 104.7" fill="#ff4100"/><path d="M256.2 104.7L263.8 97.0L259.5 92.2L251.8 99.9" fill="#ff3500"/><path d="M251.8 99.9L259.5 92.2L255.1 87.3L247.5 95.1" fill="#ff2900"/><path d="M247.5 95.1L255.1 87.3L250.7 82.4L243.1 90.4" fill="#ff1d00"/></g></g><path d="M170.6 340.0L69.4 281.4M170.6 340.0L347.4 210.2M188.3 327.0L87.1 263.3M160.5 334.1L337.3 199.2M206.0 314.0L104.8 245.1M150.4 328.3L327.2 188.2M223.6 301.1L122.4 227.0M140.2 322.4L317.0 177.2M241.3 288.1L140.1 208.9M130.1 316.6L306.9 166.2M259.0 275.1L157.8 190.8M120.0 310.7L296.8 155.2M276.7 262.1L175.5 172.6M109.9 304.8L286.7 144.1M294.4 249.1L193.2 154.5M99.8 299.0L276.6 133.1M312.0 236.2L210.8 136.4M89.6 293.1L266.4 122.1M329.7 223.2L228.5 118.2M79.5 287.3L256.3 111.1M347.4 210.2L246.2 100.1M69.4 281.4L246.2 100.1" fill="none" stroke="#050505" stroke-width="0.85" stroke-opacity="0.95"/><path d="M256.8 130.8h2.6l-1.5 2.4z" fill="#2edc2e" stroke="#143014" stroke-width="0.5"/><path d="M232.5 143.6h2.6l-1.5 2.4z" fill="#2edc2e" stroke="#143014" stroke-width="0.5"/><path d="M194.7 160.1h2.6l-1.5 2.4z" fill="#2edc2e" stroke="#143014" stroke-width="0.5"/><path d="M197.2 198.0h2.6l-1.5 2.4z" fill="#2edc2e" stroke="#143014" stroke-width="0.5"/><path d="M277.6 204.7h2.6l-1.5 2.4z" fill="#2edc2e" stroke="#143014" stroke-width="0.5"/><path d="M209.2 225.4h2.6l-1.5 2.4z" fill="#2edc2e" stroke="#143014" stroke-width="0.5"/><path d="M165.1 237.8h2.6l-1.5 2.4z" fill="#2edc2e" stroke="#143014" stroke-width="0.5"/><path d="M206.1 237.8h2.6l-1.5 2.4z" fill="#2edc2e" stroke="#143014" stroke-width="0.5"/><path d="M260.5 236.8h2.6l-1.5 2.4z" fill="#2edc2e" stroke="#143014" stroke-width="0.5"/><path d="M289.5 232.7h2.6l-1.5 2.4z" fill="#2edc2e" stroke="#143014" stroke-width="0.5"/><path d="M157.3 261.2h2.6l-1.5 2.4z" fill="#2edc2e" stroke="#143014" stroke-width="0.5"/><path d="M181.7 265.3h2.6l-1.5 2.4z" fill="#2edc2e" stroke="#143014" stroke-width="0.5"/><path d="M228.3 271.0h2.6l-1.5 2.4z" fill="#2edc2e" stroke="#143014" stroke-width="0.5"/><path d="M106.6 257.6h2.6l-1.5 2.4z" fill="#2edc2e" stroke="#143014" stroke-width="0.5"/><path d="M115.4 292.3h2.6l-1.5 2.4z" fill="#2edc2e" stroke="#143014" stroke-width="0.5"/><path d="M179.1 291.2h2.6l-1.5 2.4z" fill="#2edc2e" stroke="#143014" stroke-width="0.5"/><path d="M132.5 316.1h2.6l-1.5 2.4z" fill="#2edc2e" stroke="#143014" stroke-width="0.5"/><path d="M183.3 320.3h2.6l-1.5 2.4z" fill="#2edc2e" stroke="#143014" stroke-width="0.5"/><path d="M346.3 209.8h2.6l-1.5 2.4z" fill="#2edc2e" stroke="#143014" stroke-width="0.5"/><path d="M169.6 338.3h2.6l-1.5 2.4z" fill="#2edc2e" stroke="#143014" stroke-width="0.5"/><g stroke="#111" stroke-width="0.9" fill="none"><line x1="170.6" y1="340.0" x2="347.4" y2="313.3"/><line x1="170.6" y1="340.0" x2="69.4" y2="294.3"/><line x1="347.4" y1="313.3" x2="347.4" y2="132.9"/><line x1="347.4" y1="313.3" x2="353.6" y2="312.6"/><line x1="347.4" y1="287.5" x2="353.6" y2="286.8"/><line x1="347.4" y1="261.8" x2="353.6" y2="261.1"/><line x1="347.4" y1="236.0" x2="353.6" y2="235.3"/><line x1="347.4" y1="210.2" x2="353.6" y2="209.5"/><line x1="347.4" y1="184.4" x2="353.6" y2="183.7"/><line x1="347.4" y1="158.7" x2="353.6" y2="158.0"/><line x1="347.4" y1="132.9" x2="353.6" y2="132.2"/><line x1="170.6" y1="340.0" x2="175.1" y2="342.4"/><line x1="214.8" y1="333.3" x2="219.3" y2="335.7"/><line x1="259.0" y1="326.6" x2="263.5" y2="329.0"/><line x1="303.2" y1="320.0" x2="307.7" y2="322.4"/><line x1="347.4" y1="313.3" x2="351.9" y2="315.7"/><line x1="170.6" y1="340.0" x2="163.1" y2="341.2"/><line x1="145.3" y1="328.6" x2="137.8" y2="329.8"/><line x1="120.0" y1="317.2" x2="112.5" y2="318.4"/><line x1="94.7" y1="305.7" x2="87.2" y2="306.9"/><line x1="69.4" y1="294.3" x2="61.9" y2="295.5"/></g><g font-family="Liberation Sans, sans-serif" font-size="9.300" fill="#161616"><text transform="translate(380.3 319.8) scale(.84 1)" text-anchor="middle" >2.0E4</text><text transform="translate(380.3 294.0) scale(.84 1)" text-anchor="middle" >4.0E4</text><text transform="translate(380.3 268.2) scale(.84 1)" text-anchor="middle" >6.0E4</text><text transform="translate(380.3 242.4) scale(.84 1)" text-anchor="middle" >8.0E4</text><text transform="translate(380.3 216.6) scale(.84 1)" text-anchor="middle" >1.0E5</text><text transform="translate(380.3 190.8) scale(.84 1)" text-anchor="middle" >1.2E5</text><text transform="translate(380.3 165.0) scale(.84 1)" text-anchor="middle" >1.4E5</text><text transform="translate(380.3 139.2) scale(.84 1)" text-anchor="middle" >1.6E5</text><text transform="translate(43.2 309.6) scale(.84 1)" text-anchor="middle" >60</text><text transform="translate(69.0 321.0) scale(.84 1)" text-anchor="middle" >55</text><text transform="translate(94.8 332.3) scale(.84 1)" text-anchor="middle" >50</text><text transform="translate(119.8 344.1) scale(.84 1)" text-anchor="middle" >45</text><text transform="translate(145.2 355.3) scale(.84 1)" text-anchor="middle" >40</text><text transform="translate(185.0 357.6) scale(.84 1)" text-anchor="middle" >1</text><text transform="translate(229.8 351.5) scale(.84 1)" text-anchor="middle" >2</text><text transform="translate(273.9 344.6) scale(.84 1)" text-anchor="middle" >3</text><text transform="translate(317.7 338.1) scale(.84 1)" text-anchor="middle" >4</text><text transform="translate(362.0 331.0) scale(.84 1)" text-anchor="middle" >5</text><text transform="translate(73.2 335.3) scale(.84 1)" text-anchor="middle" >H1</text><text transform="translate(289.4 350.1) scale(.84 1)" text-anchor="middle" >W1</text><text transform="translate(404.6 223.9) rotate(-90) scale(1 .84)" text-anchor="middle">V</text><text transform="translate(397.300 31.3) scale(.84 1)" text-anchor="end">1.8E5</text><text transform="translate(397.300 42.9) scale(.84 1)" text-anchor="end">1.4E5</text><text transform="translate(397.300 55.3) scale(.84 1)" text-anchor="end">1.0E5</text><text transform="translate(397.300 68.6) scale(.84 1)" text-anchor="end">6.0E4</text><text transform="translate(397.300 81.2) scale(.84 1)" text-anchor="end">2.0E4</text></g><rect x="399" y="29.20" width="13" height="6.60" fill="#ff0000"/><rect x="399" y="35.75" width="13" height="6.60" fill="#ff6d00"/><rect x="399" y="42.30" width="13" height="6.60" fill="#ffdb00"/><rect x="399" y="48.85" width="13" height="6.60" fill="#b6ff49"/><rect x="399" y="55.40" width="13" height="6.60" fill="#49ffb6"/><rect x="399" y="61.95" width="13" height="6.60" fill="#00dbff"/><rect x="399" y="68.50" width="13" height="6.60" fill="#006dff"/><rect x="399" y="75.05" width="13" height="6.60" fill="#0000ff"/><rect x="399" y="29.2" width="13" height="52.4" fill="none" stroke="#222" stroke-width="0.8"/><path d="M399 29.20h2.200M412 29.20h-2.200" stroke="#222" stroke-width="0.700"/><path d="M399 35.75h2.200M412 35.75h-2.200" stroke="#222" stroke-width="0.700"/><path d="M399 42.30h2.200M412 42.30h-2.200" stroke="#222" stroke-width="0.700"/><path d="M399 48.85h2.200M412 48.85h-2.200" stroke="#222" stroke-width="0.700"/><path d="M399 55.40h2.200M412 55.40h-2.200" stroke="#222" stroke-width="0.700"/><path d="M399 61.95h2.200M412 61.95h-2.200" stroke="#222" stroke-width="0.700"/><path d="M399 68.50h2.200M412 68.50h-2.200" stroke="#222" stroke-width="0.700"/><path d="M399 75.05h2.200M412 75.05h-2.200" stroke="#222" stroke-width="0.700"/><path d="M399 81.60h2.200M412 81.60h-2.200" stroke="#222" stroke-width="0.700"/></svg>
<svg class="abs" style="left:90px;top:405px" width="15" height="15" viewBox="0 0 15 15"><rect x="0.4" y="0.4" width="14.2" height="14.200" fill="#fff" stroke="#dcdcdc" stroke-width="0.800"/><g fill="#1c3f98"><path d="M1.300 1.300h4.200l-1.400 1.400 1.500 1.500-1.200 1.200-1.500-1.500-1.600 1.600z"/><path d="M13.700 1.300v4.200l-1.400-1.400-1.500 1.500-1.200-1.200 1.500-1.500-1.600-1.600z"/><path d="M1.300 13.700v-4.200l1.400 1.400 1.500-1.500 1.200 1.200-1.500 1.500 1.600 1.600z"/><path d="M13.700 13.700h-4.200l1.400-1.400-1.500-1.500 1.200-1.200 1.500 1.500 1.600-1.600z"/></g></svg>
<svg class="abs" style="left:111.4px;top:404.4px" width="17.4" height="15.2" viewBox="0 0 17.4 15.2"><rect x="0" y="0" width="17.4" height="15.2" rx="2" fill="#d0d0d0"/><path d="M2.200 5.200c0-1.800 2.900-3 6.600-3s6.600 1.200 6.600 3v4.600c0 1.800-2.900 3-6.600 3s-6.600-1.200-6.600-3z" fill="#4e4e4e"/><ellipse cx="8.800" cy="5.300" rx="5.500" ry="2.200" fill="#c4c4c4"/><path d="M10 7.300c2-.1 3.600-.5 4.600-1.200v4.300c-1 .8-2.600 1.200-4.600 1.300z" fill="#f2f2f2"/><path d="M1.600 6.200h3.400v-1.900l3.800 3.900-3.800 3.900v-1.900h-3.400z" fill="#1d4ea2"/></svg>
<svg class="abs" style="left:134px;top:404px" width="16" height="16" viewBox="0 0 16 16"><path d="M6.300 9.300l3.300 3.700" stroke="#8c8c90" stroke-width="1.700"/><circle cx="4.300" cy="6.900" r="3" fill="#d6e4f6" stroke="#8fa2c2" stroke-width="1.100"/><path d="M9.800 4h5.400M12.500 1.300v5.400M10 14.400h4.800" stroke="#1c4fa8" stroke-width="1.400"/></svg>
<svg class="abs" style="left:157px;top:405px" width="14" height="15" viewBox="0 0 14 15"><rect x="0" y="0.300" width="13.800" height="1.200" fill="#3c3c3c"/><rect x="0" y="13" width="13.800" height="1.200" fill="#3c3c3c"/><path d="M6.900 3v8.400" stroke="#2a78a8" stroke-width="1.300"/><path d="M6.900 2.200l2.700 3.400h-5.400zM6.900 12.300l2.700-3.400h-5.400z" fill="#2a78a8"/></svg>
<div class="abs" style="left:177.3px;top:403.0px;width:1.0px;height:18.0px;background:#dadada;"></div>
<svg class="abs" style="left:183.2px;top:404.3px" width="17.4" height="15.2" viewBox="0 0 17.4 15.2"><rect x="0" y="0" width="17.4" height="15.2" rx="2" fill="#d0d0d0"/><g fill="none" stroke="#141414" stroke-width="0.800"><path d="M1.500 11.500c3-2.500 4.500-9.500 7-9.500s4 6 7.500 11"/><path d="M2.200 12.300c3-2 4.500-8 6.600-8s3.500 5.500 6.200 9"/><path d="M3.500 12.800c2.300-1.600 3.500-6.600 5.200-6.600s3 4.800 5 7.200"/><path d="M5 13c1.600-1.200 2.400-4.600 3.700-4.600s2.300 3.400 3.800 5"/><path d="M6.500 13.200c1-0.800 1.500-2.800 2.200-2.800s1.400 2 2.300 3.200"/><path d="M2.500 10.500l4 2.700M4 8l5 5.500M5.500 5.500l6 8M7 3l6.500 10M10.500 4l-6 9M12 7l-5 6.500M13.500 10l-3 3.500M8.700 2l-4 10"/></g></svg>
<svg class="abs" style="left:205px;top:404.3px" width="17.4" height="15.2" viewBox="0 0 17.4 15.2"><rect x="0" y="0" width="17.4" height="15.2" rx="2" fill="#d0d0d0"/><path d="M1.700 11.200c3.300-2.500 4.300-9 7-9s3.800 5.500 7 10.500c-2 1.200-4 1.500-6.500 1.200s-5.500-1.700-7.500-2.700z" fill="#1a56e0"/><path d="M3.400 9.600c2.200-2.500 3.100-7.400 5.300-7.400s3.200 4.400 5.500 8.200c-2.500 1.400-8 0.800-10.800-0.800z" fill="#22d4c4"/><path d="M4.900 7.500c1.400-2.300 2.200-5.300 3.800-5.300s2.500 2.800 4 5.700c-2 1-5.800 0.700-7.800-0.400z" fill="#f2e21c"/><path d="M6 5.300c.9-1.700 1.500-3.100 2.700-3.100s1.900 1.400 2.900 3.400c-1.500.8-4 .6-5.600-.3z" fill="#f0301a"/></svg>
<svg class="abs" style="left:226.9px;top:404.3px" width="17.8" height="15.2" viewBox="0 0 17.8 15.2"><rect x="0" y="0" width="17.8" height="15.2" rx="2" fill="#d0d0d0"/><path d="M1.700 11.200c3.300-2.500 4.300-9 7-9s3.800 5.500 7 10.500c-2 1.200-4 1.500-6.500 1.200s-5.500-1.700-7.500-2.700z" fill="#1a56e0"/><path d="M3.400 9.600c2.200-2.500 3.100-7.400 5.300-7.400s3.200 4.400 5.500 8.200c-2.500 1.400-8 0.800-10.800-0.800z" fill="#22d4c4"/><path d="M4.900 7.500c1.400-2.300 2.200-5.300 3.800-5.300s2.500 2.800 4 5.700c-2 1-5.800 0.700-7.800-0.400z" fill="#f2e21c"/><path d="M6 5.300c.9-1.700 1.500-3.100 2.700-3.100s1.900 1.400 2.900 3.400c-1.500.8-4 .6-5.600-.3z" fill="#f0301a"/><g fill="#142a6a"><circle cx="5.500" cy="10.300" r="1"/><circle cx="9.500" cy="4.500" r="0.900"/><circle cx="11.800" cy="8.800" r="1"/><circle cx="13.200" cy="12.200" r="1"/></g></svg>
<div class="abs" style="left:249.2px;top:404.3px;width:16.2px;height:15.2px;background:#d0d0d0;border-radius:2px"></div>
<div class="abs" style="left:251.0px;top:405.2px;width:10.0px;height:13.4px;background:linear-gradient(180deg,#e8102c 0%,#d8143c 25%,#8a22a0 55%,#2a2ce0 85%,#1428e8 100%);"></div>
<div class="abs" style="left:261.3px;top:406.0px;width:1.0px;height:12.0px;background:#3a4a9a;"></div>
<div class="abs" style="left:262.0px;top:405.5px;width:2.5px;height:13.0px;background:repeating-linear-gradient(180deg,#30409a 0 1px,transparent 1px 4px);"></div>
<svg class="abs" style="left:272.2px;top:404.3px" width="16.2" height="15.2" viewBox="0 0 16.2 15.2"><rect x="0.500" y="0.500" width="15.200" height="14.200" fill="#fbfbf8" stroke="#a8c6e6"/><g fill="none" stroke-width="0.800"><path d="M2 2.500c4-1.500 9-1 12.200 1.500c-1.500 3-1.500 6 0 8.500c-4 1.500-9 1.500-12.200-0.500c1.500-3 1.500-6 0-9.500z" stroke="#f0a8a8"/><ellipse cx="7.700" cy="7.700" rx="4.800" ry="4.200" stroke="#e8d890"/><ellipse cx="7.700" cy="7.700" rx="3.300" ry="2.800" stroke="#a0d8a0"/><ellipse cx="7.700" cy="7.700" rx="1.800" ry="1.400" stroke="#90b8e8"/></g></svg>
<div class="fld" style="left:293.400px;top:403.600px;width:35.400px;height:17.700px"></div>
<div class="t" id="t1" style="left:299.50px;top:406.35px;font-size:10.14px;line-height:11.67px;color:#000;transform:scaleX(0.8877);">10</div>
<svg class="abs" style="left:2px;top:421px" width="24" height="8" viewBox="0 0 24 8"><path d="M2 6.200l3.300-4.200 3.300 4.200zM12.700 2h7.400l-3.700 4.200z" fill="#666"/></svg>
<div class="abs" style="left:204.5px;top:424.3px;width:2.0px;height:2.0px;background:#b4b4b4;"></div>
<div class="abs" style="left:208.5px;top:424.3px;width:2.0px;height:2.0px;background:#b4b4b4;"></div>
<div class="abs" style="left:212.5px;top:424.3px;width:2.0px;height:2.0px;background:#b4b4b4;"></div>
<div class="abs" style="left:1px;top:429.500px;width:416px;height:107px;border:1px solid #dcdcdc;border-bottom:none"></div>
<div class="abs" style="left:4px;top:436.200px;width:402px;height:99.300px;border:1px solid #d8d8d8"></div>
<div class="t" id="t2" style="left:8.00px;top:431.19px;font-size:9.57px;line-height:11.00px;color:#111;background:#f0f0f0;transform:scaleX(1.0288);">Approximated Equations</div>
<div class="abs" style="left:407.4px;top:430.5px;width:8.4px;height:43.3px;background:#cdcdcd;"></div>
<div class="t" id="t3" style="left:6.20px;top:445.85px;font-size:10.14px;line-height:11.67px;color:#000;transform:scaleX(0.9323);">V = -4.94765118E-10 - 6.80302037E-10*W1 + 6.82121026E-13*H1 +</div>
<div class="t" id="t4" style="left:6.20px;top:459.35px;font-size:10.14px;line-height:11.67px;color:#000;transform:scaleX(0.9254);">500.000000000017*W1*H1</div>
<div class="t" id="t5" style="left:6.20px;top:486.45px;font-size:10.14px;line-height:11.67px;color:#000;transform:scaleX(0.9300);">D = 19.70984231105 - 6.375096000271*W1 + 1.793939970159*W3 - 0.314057853723*H1 +</div>
<div class="t" id="t6" style="left:6.20px;top:500.05px;font-size:10.14px;line-height:11.67px;color:#000;transform:scaleX(0.9324);">0.060423545762*H3 + 0.060745903072*W1*H1 - 0.020141181921*W3*H3 +</div>
<div class="t" id="t7" style="left:6.20px;top:513.55px;font-size:10.14px;line-height:11.67px;color:#000;transform:scaleX(0.9458);">0.41445906725*W1^2 - 0.131146812353*W3^2</div>
<svg class="abs" style="left:418px;top:22px" width="6" height="22" viewBox="0 0 6 22"><path d="M4.300 2v6.600l-3.500-3.300zM1 12.500v6.600l3.500-3.300z" fill="#555"/></svg>
<div class="abs" style="left:424px;top:21.400px;width:193px;height:254px;border:1px solid #d6d6d6;border-right:none"></div>
<div class="abs" style="left:426.600px;top:28.200px;width:190px;height:235px;border:1px solid #dedede;border-right:none"></div>
<div class="t" id="t8" style="left:429.60px;top:22.99px;font-size:9.57px;line-height:11.00px;color:#111;background:#f0f0f0;transform:scaleX(1.0526);">Input</div>
<div class="abs" style="left:427.6px;top:36.6px;width:187.0px;height:44.9px;background:#f0f0f0;"></div>
<div class="cb on" style="left:430.300px;top:45.2px"><svg style="position:absolute;left:0;top:0" width="11.500" height="11.200" viewBox="0 0 12 12"><path d="M2.500 6.200l2.300 2.500 4.700-5.200" fill="none" stroke="#fff" stroke-width="1.600"/></svg></div>
<div class="t" id="t9" style="left:445.50px;top:45.15px;font-size:10.58px;line-height:12.17px;color:#111;transform:scaleX(0.8378);">W1</div>
<div class="fld" style="left:551.300px;top:38.5px;width:70px;height:24.800px"></div>
<div class="t" id="t10" style="left:557.00px;top:45.05px;font-size:10.14px;line-height:11.67px;color:#000;transform:scaleX(0.8200);">1</div>
<div class="t" id="t11" style="left:428.40px;top:67.45px;font-size:10.14px;line-height:11.67px;color:#000;transform:scaleX(0.8240);">1.0</div>
<div class="abs" style="left:454.2px;top:72.4px;width:153.6px;height:2.0px;background:#cbcbcb;border-radius:1px"></div>
<div class="knob" style="left:446.4px;top:68.6px"></div>
<div class="abs" style="left:427.6px;top:81.5px;width:187.0px;height:44.9px;background:#fff;"></div>
<div class="cb dis" style="left:430.300px;top:90.1px"></div>
<div class="t" id="t12" style="left:445.50px;top:90.05px;font-size:10.58px;line-height:12.17px;color:#989898;transform:scaleX(0.8378);">W3</div>
<div class="fld" style="left:551.300px;top:83.4px;width:70px;height:24.800px"></div>
<div class="t" id="t13" style="left:557.00px;top:89.95px;font-size:10.14px;line-height:11.67px;color:#000;transform:scaleX(0.8200);">1</div>
<div class="t" id="t14" style="left:428.40px;top:112.35px;font-size:10.14px;line-height:11.67px;color:#000;transform:scaleX(0.8240);">1.0</div>
<div class="knob" style="left:446.4px;top:113.5px"></div>
<div class="abs" style="left:427.6px;top:126.4px;width:187.0px;height:44.9px;background:#f0f0f0;"></div>
<div class="cb on" style="left:430.300px;top:135.0px"><svg style="position:absolute;left:0;top:0" width="11.500" height="11.200" viewBox="0 0 12 12"><path d="M2.500 6.200l2.300 2.500 4.700-5.200" fill="none" stroke="#fff" stroke-width="1.600"/></svg></div>
<div class="t" id="t15" style="left:445.50px;top:134.95px;font-size:10.58px;line-height:12.17px;color:#111;transform:scaleX(0.8200);">H1</div>
<div class="fld" style="left:551.300px;top:128.3px;width:70px;height:24.800px"></div>
<div class="t" id="t16" style="left:557.00px;top:134.85px;font-size:10.14px;line-height:11.67px;color:#000;transform:scaleX(0.8610);">40</div>
<div class="t" id="t17" style="left:428.40px;top:157.25px;font-size:10.14px;line-height:11.67px;color:#000;transform:scaleX(0.8571);">40.0</div>
<div class="abs" style="left:459.8px;top:162.2px;width:142.8px;height:2.0px;background:#cbcbcb;border-radius:1px"></div>
<div class="knob" style="left:452.0px;top:158.4px"></div>
<div class="abs" style="left:427.6px;top:171.3px;width:187.0px;height:44.9px;background:#fff;"></div>
<div class="cb dis" style="left:430.300px;top:179.9px"></div>
<div class="t" id="t18" style="left:445.50px;top:179.85px;font-size:10.58px;line-height:12.17px;color:#989898;transform:scaleX(0.8351);">H2</div>
<div class="fld" style="left:551.300px;top:173.2px;width:70px;height:24.800px"></div>
<div class="t" id="t19" style="left:557.00px;top:179.75px;font-size:10.14px;line-height:11.67px;color:#000;transform:scaleX(0.8610);">40</div>
<div class="t" id="t20" style="left:428.40px;top:202.15px;font-size:10.14px;line-height:11.67px;color:#000;transform:scaleX(0.8571);">40.0</div>
<div class="knob" style="left:452.0px;top:203.3px"></div>
<div class="abs" style="left:427.6px;top:216.2px;width:187.0px;height:44.9px;background:#f0f0f0;"></div>
<div class="cb dis" style="left:430.300px;top:224.8px"></div>
<div class="t" id="t21" style="left:445.50px;top:224.75px;font-size:10.58px;line-height:12.17px;color:#989898;transform:scaleX(0.8351);">H3</div>
<div class="fld" style="left:551.300px;top:218.1px;width:70px;height:24.800px"></div>
<div class="t" id="t22" style="left:557.00px;top:224.65px;font-size:10.14px;line-height:11.67px;color:#000;transform:scaleX(0.8610);">40</div>
<div class="t" id="t23" style="left:428.40px;top:247.05px;font-size:10.14px;line-height:11.67px;color:#000;transform:scaleX(0.8571);">40.0</div>
<div class="abs" style="left:459.8px;top:252.0px;width:142.8px;height:2.0px;background:#cbcbcb;border-radius:1px"></div>
<div class="knob" style="left:452.0px;top:248.2px"></div>
<div class="abs" style="left:425.0px;top:264.8px;width:169.6px;height:8.7px;background:#dadada;"></div>
<div class="abs" style="left:594.6px;top:264.8px;width:20.0px;height:8.7px;background:#ececec;"></div>
<svg class="abs" style="left:424px;top:274px" width="24" height="8" viewBox="0 0 24 8"><path d="M2 6.200l3.500-4.200 3.500 4.200zM13 2h7.200l-3.600 4.200z" fill="#666"/></svg>
<div class="abs" style="left:513.0px;top:277.0px;width:2.0px;height:2.0px;background:#b4b4b4;"></div>
<div class="abs" style="left:517.0px;top:277.0px;width:2.0px;height:2.0px;background:#b4b4b4;"></div>
<div class="abs" style="left:521.0px;top:277.0px;width:2.0px;height:2.0px;background:#b4b4b4;"></div>
<div class="abs" style="left:419.0px;top:272.0px;width:1.5px;height:13.0px;background:repeating-linear-gradient(180deg,#b0b0b0 0 1.500px,transparent 1.500px 4px);"></div>
<div class="abs" style="left:424px;top:282px;width:193px;height:255px;border:1px solid #d6d6d6;border-right:none"></div>
<div class="abs" style="left:426.600px;top:289.200px;width:190px;height:235.400px;border:1px solid #dedede;border-right:none"></div>
<div class="t" id="t24" style="left:430.20px;top:283.99px;font-size:9.57px;line-height:11.00px;color:#111;background:#f0f0f0;transform:scaleX(1.0307);">Output</div>
<div class="abs" style="left:427.6px;top:297.6px;width:187.0px;height:44.7px;background:#f0f0f0;"></div>
<div class="cb on" style="left:430.300px;top:307.6px"><svg style="position:absolute;left:0;top:0" width="11.500" height="11.200" viewBox="0 0 12 12"><path d="M2.500 6.200l2.300 2.500 4.700-5.200" fill="none" stroke="#fff" stroke-width="1.600"/></svg></div>
<div class="t" id="t25" style="left:445.50px;top:307.38px;font-size:10.43px;line-height:12.00px;color:#111;transform:scaleX(0.8200);">V</div>
<div class="abs" style="left:539.2px;top:299.6px;width:76.0px;height:26.7px;background:#ffff00;"></div>
<div class="t" id="t26" style="left:544.80px;top:306.95px;font-size:10.14px;line-height:11.67px;color:#000;transform:scaleX(0.9014);">20000.0</div>
<div class="t" id="t27" style="left:428.30px;top:329.28px;font-size:10.43px;line-height:12.00px;color:#000;transform:scaleX(0.8677);">23684.2</div>
<div class="t" id="t28" style="left:591.70px;top:329.28px;font-size:10.43px;line-height:12.00px;color:#000;transform:scaleX(0.8200);">1.37E5</div>
<div class="bar" style="left:464.0px;top:329.0px;width:123.5px;height:12.700px;background:#cdcdcd"></div>
<div class="abs" style="left:427.6px;top:342.3px;width:187.0px;height:44.7px;background:#fff;"></div>
<div class="cb off" style="left:430.300px;top:352.3px"></div>
<div class="t" id="t29" style="left:445.50px;top:352.08px;font-size:10.43px;line-height:12.00px;color:#111;transform:scaleX(0.8631);">D</div>
<div class="abs" style="left:539.2px;top:344.3px;width:76.0px;height:26.7px;background:#ffff00;"></div>
<div class="t" id="t30" style="left:544.80px;top:351.65px;font-size:10.14px;line-height:11.67px;color:#000;transform:scaleX(0.9023);">6.8908153</div>
<div class="t" id="t31" style="left:428.30px;top:373.98px;font-size:10.43px;line-height:12.00px;color:#000;transform:scaleX(0.8200);">0.7</div>
<div class="t" id="t32" style="left:607.20px;top:373.98px;font-size:10.43px;line-height:12.00px;color:#000;transform:scaleX(0.8200);">6.9</div>
<div class="bar" style="left:442.8px;top:373.7px;width:160.0px;height:12.700px;background:#1f80e6"></div>
<div class="abs" style="left:427.6px;top:387.0px;width:187.0px;height:44.7px;background:#f0f0f0;"></div>
<div class="cb off" style="left:430.300px;top:397.0px"></div>
<div class="t" id="t33" style="left:445.50px;top:396.78px;font-size:10.43px;line-height:12.00px;color:#111;transform:scaleX(0.8200);">S1</div>
<div class="abs" style="left:539.2px;top:389.0px;width:76.0px;height:26.7px;background:#ffff00;"></div>
<div class="t" id="t34" style="left:544.80px;top:396.35px;font-size:10.14px;line-height:11.67px;color:#000;transform:scaleX(0.9014);">24000.0</div>
<div class="t" id="t35" style="left:428.30px;top:418.68px;font-size:10.43px;line-height:12.00px;color:#000;transform:scaleX(0.8677);">24000.0</div>
<div class="t" id="t36" style="left:586.20px;top:418.68px;font-size:10.43px;line-height:12.00px;color:#000;transform:scaleX(0.8703);">24000.0</div>
<div class="bar" style="left:464.0px;top:418.4px;width:118.5px;height:12.700px;background:#cdcdcd"></div>
<div class="abs" style="left:427.6px;top:431.7px;width:187.0px;height:44.7px;background:#fff;"></div>
<div class="cb off" style="left:430.300px;top:441.7px"></div>
<div class="t" id="t37" style="left:445.50px;top:441.48px;font-size:10.43px;line-height:12.00px;color:#111;transform:scaleX(0.8200);">S2</div>
<div class="abs" style="left:539.2px;top:433.7px;width:76.0px;height:26.7px;background:#ffff00;"></div>
<div class="t" id="t38" style="left:544.80px;top:441.05px;font-size:10.14px;line-height:11.67px;color:#000;transform:scaleX(0.9014);">16000.0</div>
<div class="t" id="t39" style="left:429.00px;top:463.38px;font-size:10.43px;line-height:12.00px;color:#000;transform:scaleX(0.8491);">16000.0</div>
<div class="t" id="t40" style="left:586.80px;top:463.38px;font-size:10.43px;line-height:12.00px;color:#000;transform:scaleX(0.8491);">16000.0</div>
<div class="abs" style="left:427.6px;top:476.4px;width:187.0px;height:47.2px;background:#f0f0f0;"></div>
<div class="cb off" style="left:430.300px;top:486.4px"></div>
<div class="t" id="t41" style="left:445.50px;top:486.18px;font-size:10.43px;line-height:12.00px;color:#111;transform:scaleX(0.8200);">S3</div>
<div class="abs" style="left:539.2px;top:478.4px;width:76.0px;height:26.7px;background:#ffff00;"></div>
<div class="t" id="t42" style="left:544.80px;top:485.75px;font-size:10.14px;line-height:11.67px;color:#000;transform:scaleX(0.8880);">8000.0</div>
<div class="t" id="t43" style="left:428.30px;top:508.08px;font-size:10.43px;line-height:12.00px;color:#000;transform:scaleX(0.8592);">8000.0</div>
<div class="t" id="t44" style="left:592.20px;top:508.08px;font-size:10.43px;line-height:12.00px;color:#000;transform:scaleX(0.8623);">8000.0</div>
<div class="bar" style="left:459.0px;top:507.8px;width:128.5px;height:12.700px;background:#cdcdcd"></div>
<div class="abs" style="left:425.0px;top:525.8px;width:180.0px;height:10.5px;background:#dcdcdc;"></div>
<div class="abs" style="left:605.0px;top:525.8px;width:10.0px;height:10.5px;background:#ececec;"></div>
<div class="abs" style="left:614.0px;top:20.5px;width:3.0px;height:517.0px;background:#fafafa;border-left:1px solid #d6d6d6"></div>
<div class="abs" style="left:0.0px;top:535.2px;width:616.0px;height:1.0px;background:#dedede;"></div>
<div class="abs" style="left:0.0px;top:536.0px;width:616.0px;height:0.7px;background:#fcfcfc;"></div>
<div class="abs" style="left:0.0px;top:536.7px;width:620.0px;height:1.0px;background:#858585;"></div>
<div class="abs" style="left:0.0px;top:537.6px;width:620.0px;height:2.4px;background:#101010;"></div>
<div class="abs" style="left:616.0px;top:0.0px;width:1.0px;height:538.0px;background:#8a8a8a;"></div>
<div class="abs" style="left:616.8px;top:0.0px;width:3.2px;height:540.0px;background:#101010;"></div></body></html>
